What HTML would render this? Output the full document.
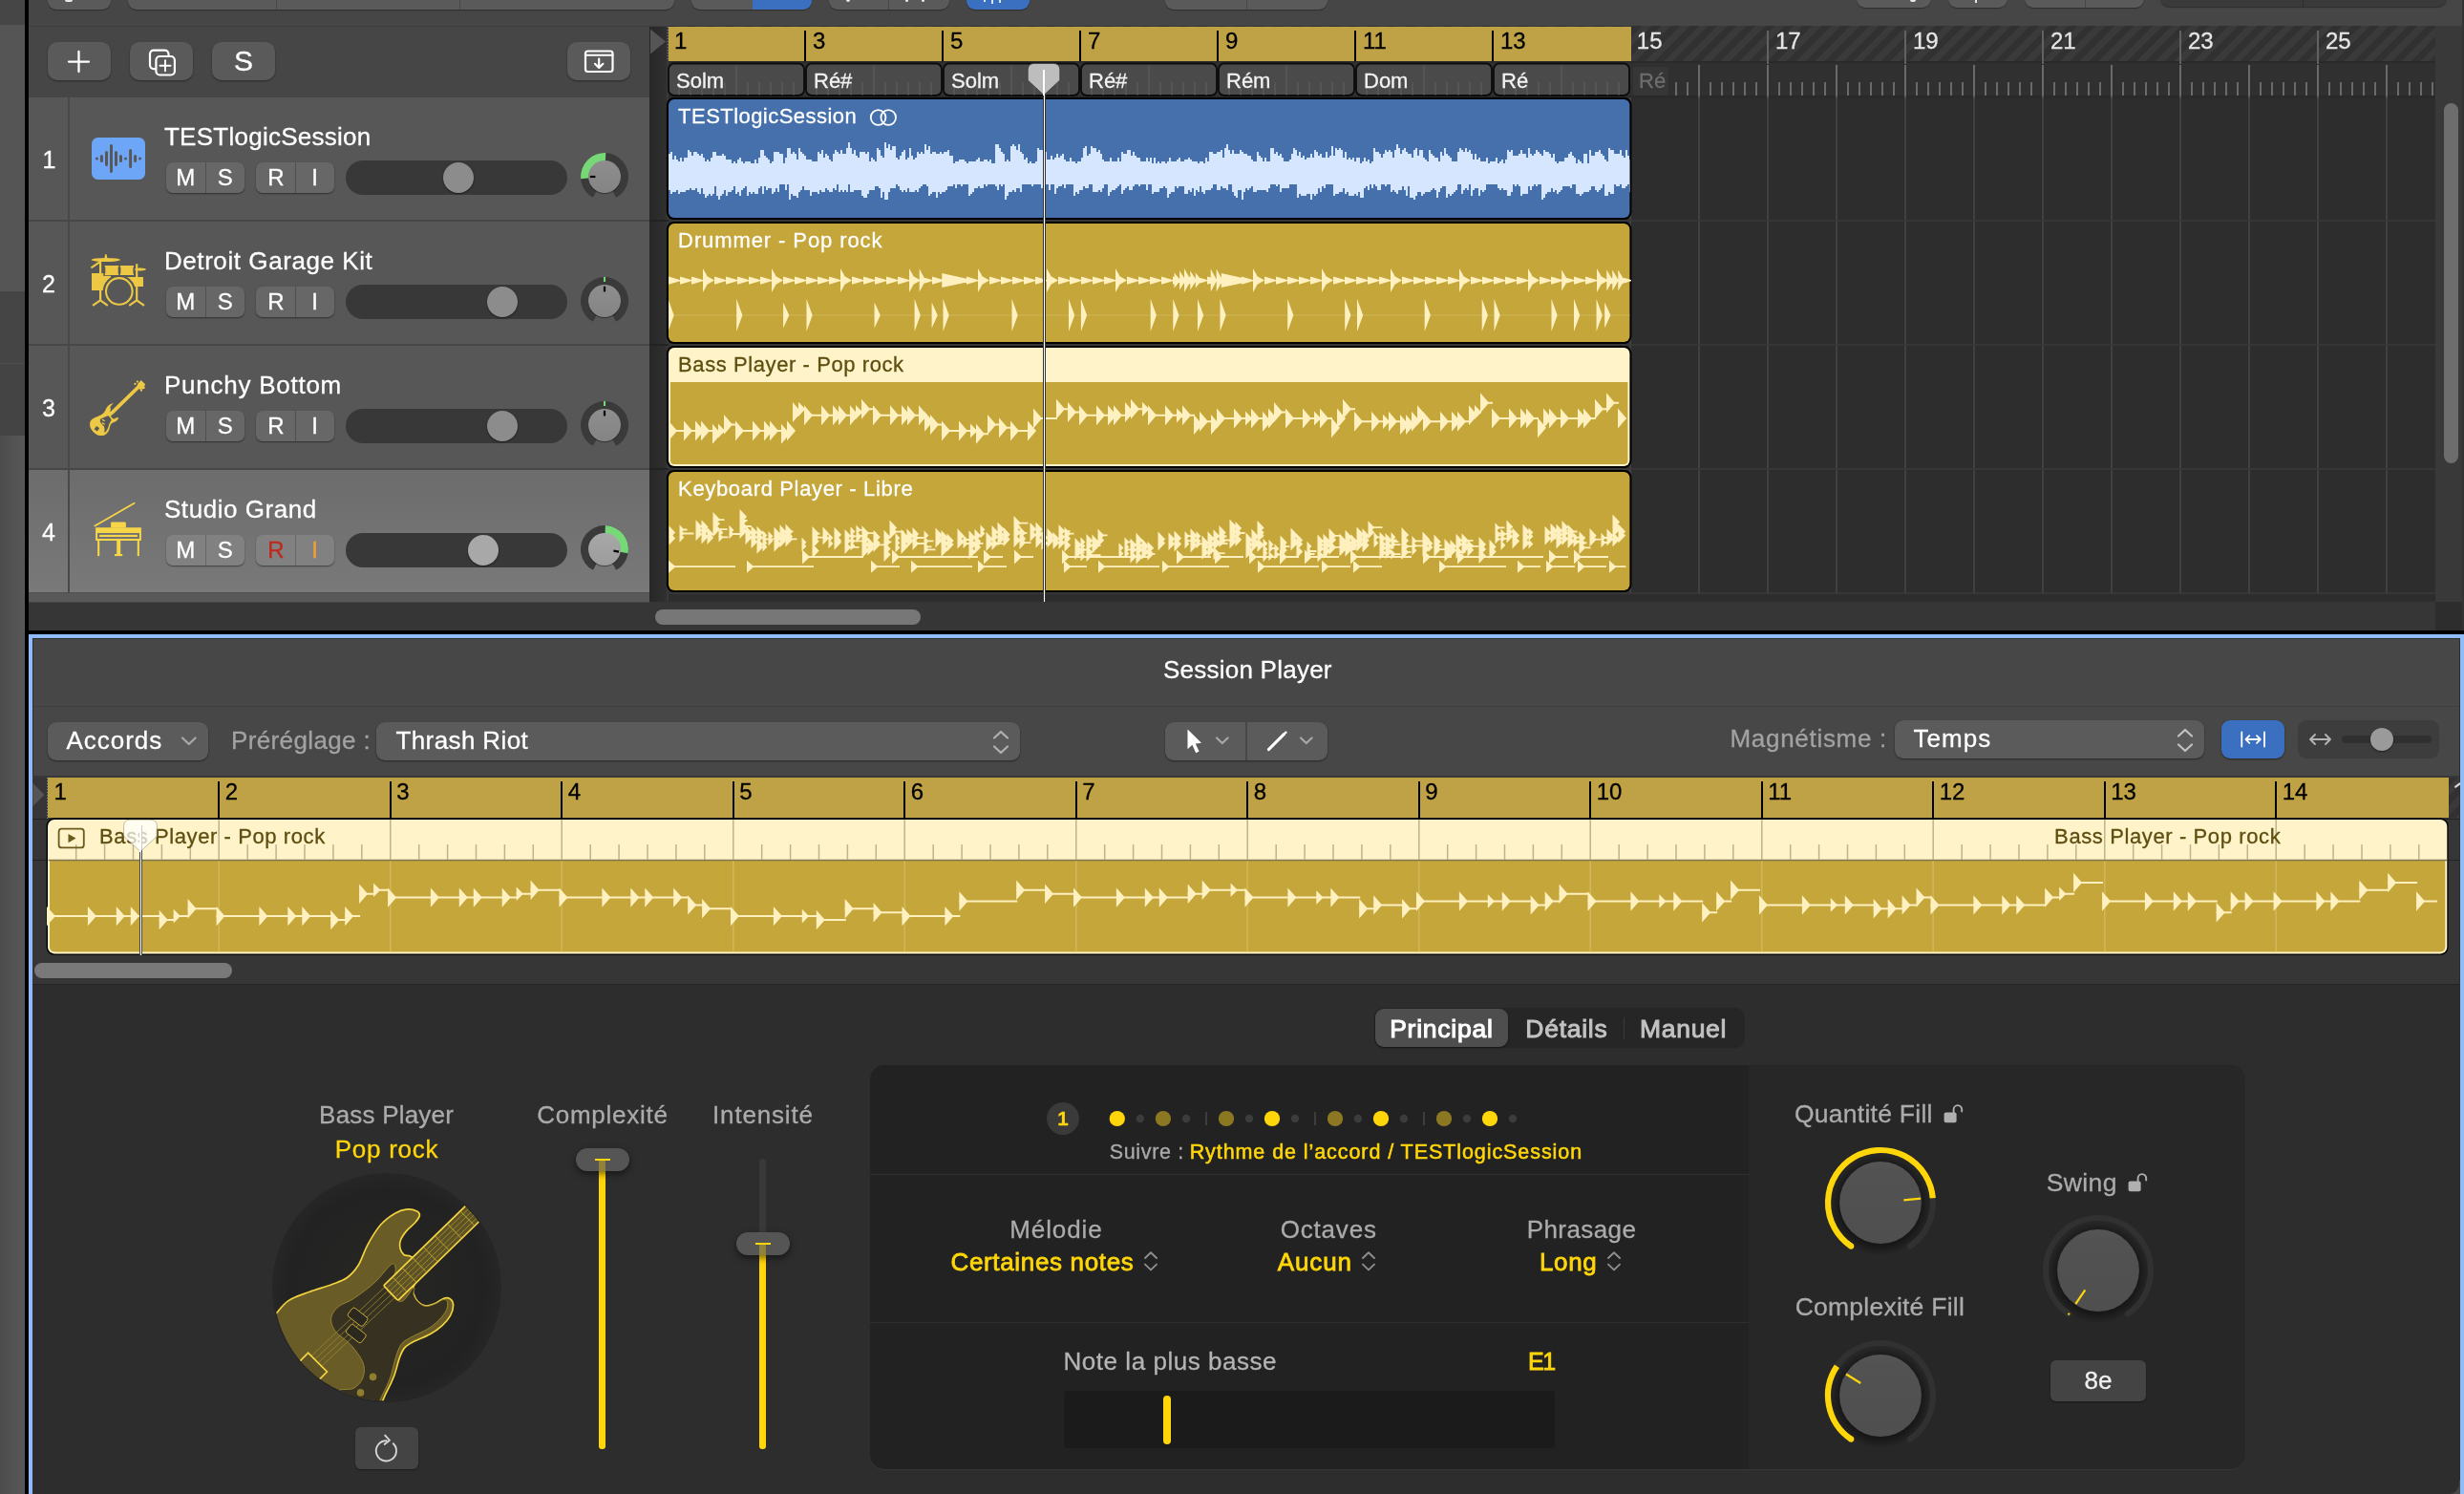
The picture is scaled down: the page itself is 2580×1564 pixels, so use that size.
<!DOCTYPE html>
<html lang="fr"><head><meta charset="utf-8"><title>Logic Pro - Session Player</title>
<style>
html,body{margin:0;padding:0}
body{width:2580px;height:1564px;overflow:hidden;position:relative;background:#464646;font-family:"Liberation Sans",sans-serif;-webkit-font-smoothing:antialiased}
div,span,svg{position:absolute;box-sizing:border-box}
span{white-space:nowrap;-webkit-text-stroke:0.3px currentColor}
#root{left:0;top:0;width:2580px;height:1564px;transform:translateZ(0);will-change:transform}
</style></head><body><div id="root">
<div style="left:0px;top:0px;width:26px;height:26px;background:#464646;"></div>
<div style="left:0px;top:26px;width:26px;height:279px;background:#555555;"></div>
<div style="left:0px;top:305px;width:26px;height:75px;background:#454545;"></div>
<div style="left:0px;top:380px;width:26px;height:76px;background:#444444;border-top:1px solid #4e4e4e;"></div>
<div style="left:0px;top:456px;width:26px;height:1108px;background:linear-gradient(90deg,#4c4c4c,#585858);"></div>
<div style="left:26px;top:0px;width:4px;height:1564px;background:#000;"></div>
<div style="left:30px;top:0px;width:2550px;height:27px;background:#464646;"></div>
<div style="left:30px;top:27px;width:2550px;height:1px;background:#3d3d3d;"></div>
<div style="left:50px;top:-12px;width:66px;height:22px;background:#5a5a5a;border-radius:9px;box-shadow:0 1px 1px rgba(0,0,0,.35);"></div>
<div style="left:134px;top:-12px;width:572px;height:22px;background:#5a5a5a;border-radius:9px;box-shadow:0 1px 1px rgba(0,0,0,.35);"></div>
<div style="left:289px;top:0px;width:1px;height:10px;background:#474747;"></div>
<div style="left:481px;top:0px;width:1px;height:10px;background:#474747;"></div>
<div style="left:724px;top:-12px;width:126px;height:22px;background:#5a5a5a;border-radius:9px;box-shadow:0 1px 1px rgba(0,0,0,.35);"></div>
<div style="left:788px;top:-12px;width:62px;height:22px;background:#3b6fc0;border-radius:0 9px 9px 0;"></div>
<div style="left:868px;top:-12px;width:126px;height:22px;background:#5a5a5a;border-radius:9px;box-shadow:0 1px 1px rgba(0,0,0,.35);"></div>
<div style="left:930px;top:0px;width:1px;height:10px;background:#474747;"></div>
<div style="left:1012px;top:-12px;width:66px;height:22px;background:#3b6fc0;border-radius:9px;box-shadow:0 1px 1px rgba(0,0,0,.35);"></div>
<div style="left:1220px;top:-12px;width:170px;height:22px;background:#5a5a5a;border-radius:9px;box-shadow:0 1px 1px rgba(0,0,0,.35);"></div>
<div style="left:1305px;top:0px;width:1px;height:10px;background:#474747;"></div>
<div style="left:1944px;top:-12px;width:78px;height:20px;background:#5a5a5a;border-radius:9px;box-shadow:0 1px 1px rgba(0,0,0,.35);"></div>
<div style="left:2040px;top:-12px;width:62px;height:20px;background:#5a5a5a;border-radius:9px;box-shadow:0 1px 1px rgba(0,0,0,.35);"></div>
<div style="left:2120px;top:-12px;width:125px;height:20px;background:#5a5a5a;border-radius:9px;box-shadow:0 1px 1px rgba(0,0,0,.35);"></div>
<div style="left:2183px;top:0px;width:1px;height:8px;background:#474747;"></div>
<div style="left:2262px;top:-12px;width:300px;height:19px;background:#3a3a3a;border-radius:9px;box-shadow:0 1px 1px rgba(0,0,0,.35);"></div>
<div style="left:2411px;top:0px;width:1px;height:7px;background:#2c2c2c;"></div>
<div style="left:68px;top:0px;width:8px;height:2px;background:#e8e8e8;border-radius:0 0 2px 2px;"></div>
<div style="left:886px;top:0px;width:4px;height:2px;background:#e8e8e8;border-radius:0 0 2px 2px;"></div>
<div style="left:948px;top:0px;width:3px;height:2px;background:#e8e8e8;border-radius:0 0 2px 2px;"></div>
<div style="left:965px;top:0px;width:3px;height:2px;background:#e8e8e8;border-radius:0 0 2px 2px;"></div>
<div style="left:2000px;top:0px;width:6px;height:2px;background:#e8e8e8;border-radius:0 0 2px 2px;"></div>
<div style="left:1038px;top:0px;width:2px;height:4px;background:#d8e4f8;"></div>
<div style="left:1046px;top:0px;width:2px;height:3px;background:#d8e4f8;"></div>
<div style="left:1030px;top:0px;width:2px;height:2px;background:#d8e4f8;"></div>
<div style="left:2068px;top:0px;width:2px;height:3px;background:#e8e8e8;"></div>
<div style="left:30px;top:28px;width:650px;height:74px;background:#464646;"></div>
<div style="left:50px;top:44px;width:66px;height:40px;background:#5a5a5a;border-radius:10px;box-shadow:0 1px 2px rgba(0,0,0,.4);"></div>
<div style="left:136px;top:44px;width:66px;height:40px;background:#5a5a5a;border-radius:10px;box-shadow:0 1px 2px rgba(0,0,0,.4);"></div>
<div style="left:222px;top:44px;width:66px;height:40px;background:#5a5a5a;border-radius:10px;box-shadow:0 1px 2px rgba(0,0,0,.4);"></div>
<div style="left:594px;top:44px;width:66px;height:40px;background:#5a5a5a;border-radius:10px;box-shadow:0 1px 2px rgba(0,0,0,.4);"></div>
<svg style="left:50px;top:44px" width="66" height="40" viewBox="0 0 66 40"><path d="M22 20.6H43M32.5 10V31" stroke="#fff" stroke-width="2.3" stroke-linecap="round" fill="none"/></svg>
<svg style="left:136px;top:44px" width="66" height="40" viewBox="0 0 66 40" fill="none" stroke="#fff" stroke-width="2.2"><rect x="21" y="8.6" width="19.5" height="19.5" rx="4"/><rect x="27.4" y="15" width="19.5" height="19.5" rx="4" fill="#5a5a5a"/><path d="M31.5 24.8H42.5M37 19.3V30.3" stroke-linecap="round" stroke-width="2"/></svg>
<span style="left:244.99px;top:49.41px;font-size:30px;line-height:30px;color:#fff;">S</span>
<svg style="left:594px;top:44px" width="66" height="40" viewBox="0 0 66 40" fill="none" stroke="#fff" stroke-width="2.2" stroke-linecap="round" stroke-linejoin="round"><rect x="19" y="9.5" width="28.5" height="21.5" rx="2.5"/><path d="M19 13.8H47.5" stroke-width="2"/><path d="M33.2 17.5V26.5M29 22.8L33.2 27L37.4 22.8"/></svg>
<div style="left:30px;top:102px;width:650px;height:528px;background:#575757;"></div>
<div style="left:30px;top:230px;width:650px;height:2px;background:#474747;"></div>
<div style="left:71px;top:102px;width:1.5px;height:129px;background:#494949;"></div>
<span style="left:44.55px;top:154.84px;font-size:25px;line-height:25px;color:#fff;">1</span>
<span style="left:171.96px;top:129.99px;font-size:26px;line-height:26px;color:#fff;letter-spacing:0.260px;">TESTlogicSession</span>
<div style="left:174px;top:170px;width:82px;height:32px;background:#676767;border-radius:7px;box-shadow:0 1px 1.5px rgba(0,0,0,.45);"></div>
<div style="left:214.5px;top:170px;width:1.5px;height:32px;background:#505050;"></div>
<div style="left:268px;top:170px;width:82px;height:32px;background:#676767;border-radius:7px;box-shadow:0 1px 1.5px rgba(0,0,0,.45);"></div>
<div style="left:308.5px;top:170px;width:1.5px;height:32px;background:#505050;"></div>
<span style="left:184.30px;top:174.48px;font-size:24px;line-height:24px;color:#fff;">M</span>
<span style="left:227.80px;top:174.48px;font-size:24px;line-height:24px;color:#fff;">S</span>
<span style="left:280.33px;top:174.48px;font-size:24px;line-height:24px;color:#fff;">R</span>
<span style="left:326.27px;top:174.48px;font-size:24px;line-height:24px;color:#fff;">I</span>
<div style="left:362px;top:168px;width:232px;height:36px;background:#383838;border-radius:18px;"></div>
<div style="left:464px;top:170px;width:32px;height:32px;background:#8c8c8c;border-radius:16px;box-shadow:0 1px 2px rgba(0,0,0,.5);"></div>
<div style="left:30px;top:360px;width:650px;height:2px;background:#474747;"></div>
<div style="left:71px;top:232px;width:1.5px;height:129px;background:#494949;"></div>
<span style="left:44.05px;top:284.84px;font-size:25px;line-height:25px;color:#fff;">2</span>
<span style="left:171.96px;top:259.99px;font-size:26px;line-height:26px;color:#fff;letter-spacing:0.572px;">Detroit Garage Kit</span>
<div style="left:174px;top:300px;width:82px;height:32px;background:#676767;border-radius:7px;box-shadow:0 1px 1.5px rgba(0,0,0,.45);"></div>
<div style="left:214.5px;top:300px;width:1.5px;height:32px;background:#505050;"></div>
<div style="left:268px;top:300px;width:82px;height:32px;background:#676767;border-radius:7px;box-shadow:0 1px 1.5px rgba(0,0,0,.45);"></div>
<div style="left:308.5px;top:300px;width:1.5px;height:32px;background:#505050;"></div>
<span style="left:184.30px;top:304.48px;font-size:24px;line-height:24px;color:#fff;">M</span>
<span style="left:227.80px;top:304.48px;font-size:24px;line-height:24px;color:#fff;">S</span>
<span style="left:280.33px;top:304.48px;font-size:24px;line-height:24px;color:#fff;">R</span>
<span style="left:326.27px;top:304.48px;font-size:24px;line-height:24px;color:#fff;">I</span>
<div style="left:362px;top:298px;width:232px;height:36px;background:#383838;border-radius:18px;"></div>
<div style="left:510px;top:300px;width:32px;height:32px;background:#8c8c8c;border-radius:16px;box-shadow:0 1px 2px rgba(0,0,0,.5);"></div>
<div style="left:30px;top:490px;width:650px;height:2px;background:#474747;"></div>
<div style="left:71px;top:362px;width:1.5px;height:129px;background:#494949;"></div>
<span style="left:44.05px;top:414.84px;font-size:25px;line-height:25px;color:#fff;">3</span>
<span style="left:171.96px;top:389.99px;font-size:26px;line-height:26px;color:#fff;letter-spacing:0.750px;">Punchy Bottom</span>
<div style="left:174px;top:430px;width:82px;height:32px;background:#676767;border-radius:7px;box-shadow:0 1px 1.5px rgba(0,0,0,.45);"></div>
<div style="left:214.5px;top:430px;width:1.5px;height:32px;background:#505050;"></div>
<div style="left:268px;top:430px;width:82px;height:32px;background:#676767;border-radius:7px;box-shadow:0 1px 1.5px rgba(0,0,0,.45);"></div>
<div style="left:308.5px;top:430px;width:1.5px;height:32px;background:#505050;"></div>
<span style="left:184.30px;top:434.48px;font-size:24px;line-height:24px;color:#fff;">M</span>
<span style="left:227.80px;top:434.48px;font-size:24px;line-height:24px;color:#fff;">S</span>
<span style="left:280.33px;top:434.48px;font-size:24px;line-height:24px;color:#fff;">R</span>
<span style="left:326.27px;top:434.48px;font-size:24px;line-height:24px;color:#fff;">I</span>
<div style="left:362px;top:428px;width:232px;height:36px;background:#383838;border-radius:18px;"></div>
<div style="left:510px;top:430px;width:32px;height:32px;background:#8c8c8c;border-radius:16px;box-shadow:0 1px 2px rgba(0,0,0,.5);"></div>
<div style="left:30px;top:492px;width:650px;height:129px;background:linear-gradient(180deg,#6c6c6c,#797979);"></div>
<div style="left:30px;top:620px;width:650px;height:2px;background:#4f4f4f;"></div>
<div style="left:71px;top:492px;width:1.5px;height:129px;background:#494949;"></div>
<span style="left:44.05px;top:544.84px;font-size:25px;line-height:25px;color:#fff;">4</span>
<span style="left:171.96px;top:519.99px;font-size:26px;line-height:26px;color:#fff;letter-spacing:0.555px;">Studio Grand</span>
<div style="left:174px;top:560px;width:82px;height:32px;background:#818181;border-radius:7px;box-shadow:0 1px 1.5px rgba(0,0,0,.45);"></div>
<div style="left:214.5px;top:560px;width:1.5px;height:32px;background:#676767;"></div>
<div style="left:268px;top:560px;width:82px;height:32px;background:#818181;border-radius:7px;box-shadow:0 1px 1.5px rgba(0,0,0,.45);"></div>
<div style="left:308.5px;top:560px;width:1.5px;height:32px;background:#676767;"></div>
<span style="left:184.30px;top:564.48px;font-size:24px;line-height:24px;color:#fff;">M</span>
<span style="left:227.80px;top:564.48px;font-size:24px;line-height:24px;color:#fff;">S</span>
<span style="left:280.33px;top:564.48px;font-size:24px;line-height:24px;color:#c0281c;">R</span>
<span style="left:326.27px;top:564.48px;font-size:24px;line-height:24px;color:#f0a030;">I</span>
<div style="left:362px;top:558px;width:232px;height:36px;background:#383838;border-radius:18px;"></div>
<div style="left:490px;top:560px;width:32px;height:32px;background:#a8a8a8;border-radius:16px;box-shadow:0 1px 2px rgba(0,0,0,.5);"></div>
<svg style="left:600.8px;top:152.8px" width="64" height="64" viewBox="0 0 64 64"><path d="M19.88 53.87A25 25 0 1 1 44.12 53.87L39.27 45.12A15 15 0 1 0 24.73 45.12Z" fill="#3a3a3a"/><path d="M7.10 34.18A25 25 0 0 1 33.31 7.03L32.79 17.02A15 15 0 0 0 17.06 33.31Z" fill="#77d877"/><defs><linearGradient id="kg0" x1="0" y1="0" x2="0" y2="1"><stop offset="0" stop-color="#8e8e8e"/><stop offset="1" stop-color="#848484"/></linearGradient></defs><circle cx="32" cy="33.2" r="17" fill="rgba(0,0,0,.35)"/><circle cx="32" cy="32" r="17" fill="url(#kg0)"/><path d="M16.80 32.00L22.40 32.00" stroke="#000" stroke-width="2.2"/></svg>
<svg style="left:600.8px;top:282.8px" width="64" height="64" viewBox="0 0 64 64"><path d="M19.88 53.87A25 25 0 1 1 44.12 53.87L39.27 45.12A15 15 0 1 0 24.73 45.12Z" fill="#3a3a3a"/><defs><linearGradient id="kg1" x1="0" y1="0" x2="0" y2="1"><stop offset="0" stop-color="#8e8e8e"/><stop offset="1" stop-color="#848484"/></linearGradient></defs><circle cx="32" cy="33.2" r="17" fill="rgba(0,0,0,.35)"/><circle cx="32" cy="32" r="17" fill="url(#kg1)"/><rect x="31" y="7" width="2" height="5" fill="#77d877"/><path d="M32.00 16.80L32.00 22.40" stroke="#000" stroke-width="2.2"/></svg>
<svg style="left:600.8px;top:412.8px" width="64" height="64" viewBox="0 0 64 64"><path d="M19.88 53.87A25 25 0 1 1 44.12 53.87L39.27 45.12A15 15 0 1 0 24.73 45.12Z" fill="#3a3a3a"/><defs><linearGradient id="kg2" x1="0" y1="0" x2="0" y2="1"><stop offset="0" stop-color="#8e8e8e"/><stop offset="1" stop-color="#848484"/></linearGradient></defs><circle cx="32" cy="33.2" r="17" fill="rgba(0,0,0,.35)"/><circle cx="32" cy="32" r="17" fill="url(#kg2)"/><rect x="31" y="7" width="2" height="5" fill="#77d877"/><path d="M32.00 16.80L32.00 22.40" stroke="#000" stroke-width="2.2"/></svg>
<svg style="left:600.8px;top:542.8px" width="64" height="64" viewBox="0 0 64 64"><path d="M19.88 53.87A25 25 0 1 1 44.12 53.87L39.27 45.12A15 15 0 1 0 24.73 45.12Z" fill="#3a3a3a"/><path d="M32.87 7.02A25 25 0 0 1 56.62 36.34L46.77 34.60A15 15 0 0 0 32.52 17.01Z" fill="#77d877"/><defs><linearGradient id="kg3" x1="0" y1="0" x2="0" y2="1"><stop offset="0" stop-color="#a8a8a8"/><stop offset="1" stop-color="#9c9c9c"/></linearGradient></defs><circle cx="32" cy="33.2" r="17" fill="rgba(0,0,0,.35)"/><circle cx="32" cy="32" r="17" fill="url(#kg3)"/><path d="M46.97 34.64L41.45 33.67" stroke="#000" stroke-width="2.2"/></svg>
<svg style="left:96px;top:144px" width="56" height="44" viewBox="0 0 56 44"><rect width="56" height="44" rx="6.5" fill="#6ea6f7"/><g stroke="#585858" stroke-width="3" stroke-linecap="round"><path d="M5.4 22v.01M10.4 19.6v4.8M15.5 15.6v12.8M20.5 8.6v26.8M25.5 15.6v12.8M30.5 19.6v4.8M35.5 22v.01M40.6 13.6v16.8M45.6 19.6v4.8M50.6 22v.01"/></g></svg>
<svg style="left:90px;top:260px" width="70" height="64" viewBox="90 260 70 64"><g fill="#ecc844" stroke="none">
<ellipse cx="110.8" cy="272" rx="15" ry="2"/><path d="M109.3 270.5L110.1 266.2H111.6L112.4 270.5Z"/>
<rect x="109.7" y="278.1" width="14.5" height="1.6"/><rect x="110.3" y="278.1" width="13.4" height="9.8"/><rect x="109.7" y="286.4" width="14.5" height="1.6"/>
<rect x="125.8" y="278.1" width="14.2" height="1.6"/><rect x="126.4" y="278.1" width="13" height="9.8"/><rect x="125.8" y="286.4" width="14.2" height="1.6"/>
<rect x="96" y="286" width="12.2" height="18"/><rect x="96" y="288.8" width="20" height="15.2"/>
<rect x="132" y="290" width="18" height="10"/>
<ellipse cx="147" cy="282" rx="6" ry="1.5"/><path d="M141 282L147 280.4V283.6Z"/>
</g><circle cx="124.8" cy="304.9" r="17" fill="#575757"/><rect x="108.2" y="304" width="8" height="2" fill="#575757"/><g stroke="#ecc844" fill="none" stroke-width="2.2">
<path d="M105.1 272V314.3M95.4 280.3L104.8 274.2M105.1 314.3L97 319.8M105.1 314.3L112.8 319.8"/>
<path d="M143.2 276.2V314.3M143.2 314.3L135.2 319.8M143.2 314.3L151 319.8"/>
<circle cx="124.8" cy="304.9" r="13.8" stroke-width="2.1"/></g></svg>
<svg style="left:80px;top:380px" width="100" height="100" viewBox="0 0 1494 1494"><g fill="#ecc844">
<path d="M545 790L1000 345" stroke="#ecc844" stroke-width="54" fill="none"/>
<path d="M952 335L1010 268L1078 332L1040 410L990 416Z"/>
<circle cx="918" cy="328" r="17"/><circle cx="955" cy="292" r="17"/><circle cx="1056" cy="388" r="17"/><circle cx="1016" cy="428" r="17"/>
<path d="M575 632C573 629 548 636 535 642C522 648 510 656 498 668C486 680 475 696 465 712C455 728 451 747 440 762C429 777 417 790 400 802C383 814 362 822 340 832C318 842 289 850 270 862C251 874 236 887 226 902C216 917 211 934 210 952C209 970 212 992 220 1012C228 1032 241 1053 256 1070C271 1087 293 1105 312 1116C331 1127 352 1134 372 1136C392 1138 414 1137 432 1130C450 1123 469 1108 482 1094C495 1080 505 1061 512 1044C519 1027 520 1006 526 990C532 974 536 961 546 950C556 939 573 933 586 926C599 919 614 915 626 906C638 897 652 881 656 872C660 863 654 854 648 852C642 850 630 856 620 860C610 864 600 873 590 873C580 873 570 868 562 862C554 856 540 844 540 834C540 824 562 812 560 800C558 788 534 773 530 760C526 747 536 733 536 722C536 711 528 702 530 692C532 682 540 672 548 662C556 652 577 635 575 632Z"/></g>
<path d="M386 872C396 864 413 860 432 852C451 844 483 824 498 824C513 824 514 841 522 852C530 863 545 880 546 892C547 904 536 910 530 922C524 934 516 947 510 962C504 977 502 996 495 1012C488 1028 479 1048 470 1060C461 1072 446 1089 441 1086C436 1083 442 1054 441 1040C440 1026 439 1012 434 1000C429 988 419 977 410 966C401 955 387 943 380 932C373 921 369 908 370 898C371 888 376 880 386 872Z" fill="#575757"/>
<path d="M320 985L362 1027L320 1069L278 1027Z" fill="#575757" transform="rotate(-8 320 1027)"/>
<g stroke="#ecc844" stroke-width="20" stroke-linecap="round"><path d="M408 888L438 904M408 940L438 956"/></g></svg>
<svg style="left:95px;top:522px" width="60" height="64" viewBox="95 522 60 64"><g fill="#f7d548">
<path d="M99.4 550.5L140.6 526.7" stroke="#f7d548" stroke-width="1.8" stroke-linecap="round"/>
<rect x="116.1" y="546.4" width="15.8" height="6.2" rx="1"/>
<path d="M100.1 552.2H147.9V566H100.1ZM102.1 558.1V564H145.9V558.1Z" fill-rule="evenodd"/>
<rect x="104.1" y="559.9" width="39.8" height="2.1"/>
<rect x="102.1" y="565.9" width="2.1" height="16.2"/><rect x="143.8" y="565.9" width="2.1" height="16.2"/>
<rect x="122.2" y="565.9" width="4" height="15"/><rect x="120" y="580" width="8.2" height="2.1"/></g></svg>
<div style="left:30px;top:621px;width:650px;height:9px;background:#595959;"></div>
<div style="left:30px;top:630px;width:2550px;height:30px;background:#363636;"></div>
<div style="left:30px;top:629.5px;width:650px;height:1px;background:#444;"></div>
<div style="left:680px;top:28px;width:18px;height:602px;background:linear-gradient(90deg,#272727,#303030);"></div>
<div style="left:698px;top:28px;width:2px;height:602px;background:#383838;"></div>
<div style="left:680px;top:230.2px;width:20px;height:1.6px;background:#232323;"></div>
<div style="left:680px;top:360.2px;width:20px;height:1.6px;background:#232323;"></div>
<div style="left:680px;top:490.2px;width:20px;height:1.6px;background:#232323;"></div>
<div style="left:700px;top:102px;width:1850px;height:528px;background:#2d2d2d;"></div>
<div style="left:2550px;top:28px;width:30px;height:602px;background:#393939;"></div>
<div style="left:2550px;top:630px;width:30px;height:30px;background:#2d2d2d;"></div>
<div style="left:2578px;top:0px;width:2px;height:660px;background:#333;"></div>
<div style="left:2558.5px;top:108px;width:15px;height:377px;background:#6d6d6d;border-radius:8px;"></div>
<div style="left:700px;top:26.5px;width:1850px;height:37.5px;background:repeating-linear-gradient(135deg,#313131 0 7px,#3a3a3a 7px 14px);"></div>
<div style="left:700px;top:64px;width:1850px;height:2px;background:#2a2a2a;"></div>
<div style="left:700px;top:28px;width:1008.0px;height:36px;background:#bfa246;"></div>
<div style="left:700px;top:66px;width:1850px;height:36px;background:#303030;"></div>
<div style="left:700px;top:100px;width:1850px;height:3px;background:#2a2a2a;"></div>
<svg style="left:680px;top:28px" width="20" height="36" viewBox="0 0 20 36"><path d="M1 2.5L17 15.5L1 28.5Z" fill="#555"/><path d="M19.2 0V36" stroke="#8a8a8a" stroke-width="1" stroke-dasharray="1.2 1.8"/></svg>
<span style="left:706.00px;top:31.28px;font-size:24px;line-height:24px;color:#000;">1</span>
<div style="left:842.0px;top:32px;width:2px;height:32px;background:#000;"></div>
<span style="left:851.00px;top:31.28px;font-size:24px;line-height:24px;color:#000;">3</span>
<div style="left:986.0px;top:32px;width:2px;height:32px;background:#000;"></div>
<span style="left:995.00px;top:31.28px;font-size:24px;line-height:24px;color:#000;">5</span>
<div style="left:1130.0px;top:32px;width:2px;height:32px;background:#000;"></div>
<span style="left:1139.00px;top:31.28px;font-size:24px;line-height:24px;color:#000;">7</span>
<div style="left:1274.0px;top:32px;width:2px;height:32px;background:#000;"></div>
<span style="left:1283.00px;top:31.28px;font-size:24px;line-height:24px;color:#000;">9</span>
<div style="left:1418.0px;top:32px;width:2px;height:32px;background:#000;"></div>
<span style="left:1427.00px;top:31.28px;font-size:24px;line-height:24px;color:#000;">11</span>
<div style="left:1562.0px;top:32px;width:2px;height:32px;background:#000;"></div>
<span style="left:1571.00px;top:31.28px;font-size:24px;line-height:24px;color:#000;">13</span>
<span style="left:1713.80px;top:31.28px;font-size:24px;line-height:24px;color:#e6e6e6;">15</span>
<div style="left:1850.0px;top:32px;width:2px;height:32px;background:#626262;"></div>
<span style="left:1859.00px;top:31.28px;font-size:24px;line-height:24px;color:#e6e6e6;">17</span>
<div style="left:1994.0px;top:32px;width:2px;height:32px;background:#626262;"></div>
<span style="left:2003.00px;top:31.28px;font-size:24px;line-height:24px;color:#e6e6e6;">19</span>
<div style="left:2138.0px;top:32px;width:2px;height:32px;background:#626262;"></div>
<span style="left:2147.00px;top:31.28px;font-size:24px;line-height:24px;color:#e6e6e6;">21</span>
<div style="left:2282.0px;top:32px;width:2px;height:32px;background:#626262;"></div>
<span style="left:2291.00px;top:31.28px;font-size:24px;line-height:24px;color:#e6e6e6;">23</span>
<div style="left:2426.0px;top:32px;width:2px;height:32px;background:#626262;"></div>
<span style="left:2435.00px;top:31.28px;font-size:24px;line-height:24px;color:#e6e6e6;">25</span>
<div style="left:1778.0px;top:99px;width:2px;height:4px;background:#585858;"></div>
<div style="left:1850.0px;top:63px;width:2px;height:4px;background:#5e5e5e;"></div>
<div style="left:1850.0px;top:99px;width:2px;height:4px;background:#585858;"></div>
<div style="left:1922.0px;top:99px;width:2px;height:4px;background:#585858;"></div>
<div style="left:1994.0px;top:63px;width:2px;height:4px;background:#5e5e5e;"></div>
<div style="left:1994.0px;top:99px;width:2px;height:4px;background:#585858;"></div>
<div style="left:2066.0px;top:99px;width:2px;height:4px;background:#585858;"></div>
<div style="left:2138.0px;top:63px;width:2px;height:4px;background:#5e5e5e;"></div>
<div style="left:2138.0px;top:99px;width:2px;height:4px;background:#585858;"></div>
<div style="left:2210.0px;top:99px;width:2px;height:4px;background:#585858;"></div>
<div style="left:2282.0px;top:63px;width:2px;height:4px;background:#5e5e5e;"></div>
<div style="left:2282.0px;top:99px;width:2px;height:4px;background:#585858;"></div>
<div style="left:2354.0px;top:99px;width:2px;height:4px;background:#585858;"></div>
<div style="left:2426.0px;top:63px;width:2px;height:4px;background:#5e5e5e;"></div>
<div style="left:2426.0px;top:99px;width:2px;height:4px;background:#585858;"></div>
<div style="left:2498.0px;top:99px;width:2px;height:4px;background:#585858;"></div>
<svg style="left:0;top:0" width="2580" height="110" viewBox="0 0 2580 110"><rect x="700.0" y="66.5" width="142.0" height="33.5" rx="6" fill="#4a4a4a" stroke="#0c0c0c" stroke-width="1.8"/><path d="M711.0 86V99.5" stroke="#5b5b5b" stroke-width="1.4"/><path d="M723.0 86V99.5" stroke="#5b5b5b" stroke-width="1.4"/><path d="M735.0 86V99.5" stroke="#5b5b5b" stroke-width="1.4"/><path d="M747.0 86V99.5" stroke="#5b5b5b" stroke-width="1.4"/><path d="M759.0 86V99.5" stroke="#5b5b5b" stroke-width="1.4"/><path d="M771.0 69V99.5" stroke="#5b5b5b" stroke-width="1.4"/><path d="M783.0 86V99.5" stroke="#5b5b5b" stroke-width="1.4"/><path d="M795.0 86V99.5" stroke="#5b5b5b" stroke-width="1.4"/><path d="M807.0 86V99.5" stroke="#5b5b5b" stroke-width="1.4"/><path d="M819.0 86V99.5" stroke="#5b5b5b" stroke-width="1.4"/><path d="M831.0 86V99.5" stroke="#5b5b5b" stroke-width="1.4"/><rect x="844.0" y="66.5" width="142.0" height="33.5" rx="6" fill="#4a4a4a" stroke="#0c0c0c" stroke-width="1.8"/><path d="M855.0 86V99.5" stroke="#5b5b5b" stroke-width="1.4"/><path d="M867.0 86V99.5" stroke="#5b5b5b" stroke-width="1.4"/><path d="M879.0 86V99.5" stroke="#5b5b5b" stroke-width="1.4"/><path d="M891.0 86V99.5" stroke="#5b5b5b" stroke-width="1.4"/><path d="M903.0 86V99.5" stroke="#5b5b5b" stroke-width="1.4"/><path d="M915.0 69V99.5" stroke="#5b5b5b" stroke-width="1.4"/><path d="M927.0 86V99.5" stroke="#5b5b5b" stroke-width="1.4"/><path d="M939.0 86V99.5" stroke="#5b5b5b" stroke-width="1.4"/><path d="M951.0 86V99.5" stroke="#5b5b5b" stroke-width="1.4"/><path d="M963.0 86V99.5" stroke="#5b5b5b" stroke-width="1.4"/><path d="M975.0 86V99.5" stroke="#5b5b5b" stroke-width="1.4"/><rect x="988.0" y="66.5" width="142.0" height="33.5" rx="6" fill="#4a4a4a" stroke="#0c0c0c" stroke-width="1.8"/><path d="M999.0 86V99.5" stroke="#5b5b5b" stroke-width="1.4"/><path d="M1011.0 86V99.5" stroke="#5b5b5b" stroke-width="1.4"/><path d="M1023.0 86V99.5" stroke="#5b5b5b" stroke-width="1.4"/><path d="M1035.0 86V99.5" stroke="#5b5b5b" stroke-width="1.4"/><path d="M1047.0 86V99.5" stroke="#5b5b5b" stroke-width="1.4"/><path d="M1059.0 69V99.5" stroke="#5b5b5b" stroke-width="1.4"/><path d="M1071.0 86V99.5" stroke="#5b5b5b" stroke-width="1.4"/><path d="M1083.0 86V99.5" stroke="#5b5b5b" stroke-width="1.4"/><path d="M1095.0 86V99.5" stroke="#5b5b5b" stroke-width="1.4"/><path d="M1107.0 86V99.5" stroke="#5b5b5b" stroke-width="1.4"/><path d="M1119.0 86V99.5" stroke="#5b5b5b" stroke-width="1.4"/><rect x="1132.0" y="66.5" width="142.0" height="33.5" rx="6" fill="#4a4a4a" stroke="#0c0c0c" stroke-width="1.8"/><path d="M1143.0 86V99.5" stroke="#5b5b5b" stroke-width="1.4"/><path d="M1155.0 86V99.5" stroke="#5b5b5b" stroke-width="1.4"/><path d="M1167.0 86V99.5" stroke="#5b5b5b" stroke-width="1.4"/><path d="M1179.0 86V99.5" stroke="#5b5b5b" stroke-width="1.4"/><path d="M1191.0 86V99.5" stroke="#5b5b5b" stroke-width="1.4"/><path d="M1203.0 69V99.5" stroke="#5b5b5b" stroke-width="1.4"/><path d="M1215.0 86V99.5" stroke="#5b5b5b" stroke-width="1.4"/><path d="M1227.0 86V99.5" stroke="#5b5b5b" stroke-width="1.4"/><path d="M1239.0 86V99.5" stroke="#5b5b5b" stroke-width="1.4"/><path d="M1251.0 86V99.5" stroke="#5b5b5b" stroke-width="1.4"/><path d="M1263.0 86V99.5" stroke="#5b5b5b" stroke-width="1.4"/><rect x="1276.0" y="66.5" width="142.0" height="33.5" rx="6" fill="#4a4a4a" stroke="#0c0c0c" stroke-width="1.8"/><path d="M1287.0 86V99.5" stroke="#5b5b5b" stroke-width="1.4"/><path d="M1299.0 86V99.5" stroke="#5b5b5b" stroke-width="1.4"/><path d="M1311.0 86V99.5" stroke="#5b5b5b" stroke-width="1.4"/><path d="M1323.0 86V99.5" stroke="#5b5b5b" stroke-width="1.4"/><path d="M1335.0 86V99.5" stroke="#5b5b5b" stroke-width="1.4"/><path d="M1347.0 69V99.5" stroke="#5b5b5b" stroke-width="1.4"/><path d="M1359.0 86V99.5" stroke="#5b5b5b" stroke-width="1.4"/><path d="M1371.0 86V99.5" stroke="#5b5b5b" stroke-width="1.4"/><path d="M1383.0 86V99.5" stroke="#5b5b5b" stroke-width="1.4"/><path d="M1395.0 86V99.5" stroke="#5b5b5b" stroke-width="1.4"/><path d="M1407.0 86V99.5" stroke="#5b5b5b" stroke-width="1.4"/><rect x="1420.0" y="66.5" width="142.0" height="33.5" rx="6" fill="#4a4a4a" stroke="#0c0c0c" stroke-width="1.8"/><path d="M1431.0 86V99.5" stroke="#5b5b5b" stroke-width="1.4"/><path d="M1443.0 86V99.5" stroke="#5b5b5b" stroke-width="1.4"/><path d="M1455.0 86V99.5" stroke="#5b5b5b" stroke-width="1.4"/><path d="M1467.0 86V99.5" stroke="#5b5b5b" stroke-width="1.4"/><path d="M1479.0 86V99.5" stroke="#5b5b5b" stroke-width="1.4"/><path d="M1491.0 69V99.5" stroke="#5b5b5b" stroke-width="1.4"/><path d="M1503.0 86V99.5" stroke="#5b5b5b" stroke-width="1.4"/><path d="M1515.0 86V99.5" stroke="#5b5b5b" stroke-width="1.4"/><path d="M1527.0 86V99.5" stroke="#5b5b5b" stroke-width="1.4"/><path d="M1539.0 86V99.5" stroke="#5b5b5b" stroke-width="1.4"/><path d="M1551.0 86V99.5" stroke="#5b5b5b" stroke-width="1.4"/><rect x="1564.0" y="66.5" width="142.0" height="33.5" rx="6" fill="#4a4a4a" stroke="#0c0c0c" stroke-width="1.8"/><path d="M1575.0 86V99.5" stroke="#5b5b5b" stroke-width="1.4"/><path d="M1587.0 86V99.5" stroke="#5b5b5b" stroke-width="1.4"/><path d="M1599.0 86V99.5" stroke="#5b5b5b" stroke-width="1.4"/><path d="M1611.0 86V99.5" stroke="#5b5b5b" stroke-width="1.4"/><path d="M1623.0 86V99.5" stroke="#5b5b5b" stroke-width="1.4"/><path d="M1635.0 69V99.5" stroke="#5b5b5b" stroke-width="1.4"/><path d="M1647.0 86V99.5" stroke="#5b5b5b" stroke-width="1.4"/><path d="M1659.0 86V99.5" stroke="#5b5b5b" stroke-width="1.4"/><path d="M1671.0 86V99.5" stroke="#5b5b5b" stroke-width="1.4"/><path d="M1683.0 86V99.5" stroke="#5b5b5b" stroke-width="1.4"/><path d="M1695.0 86V99.5" stroke="#5b5b5b" stroke-width="1.4"/><path d="M1755.0 86V100" stroke="#6a6a6a" stroke-width="2"/><path d="M1767.0 86V100" stroke="#6a6a6a" stroke-width="2"/><path d="M1779.0 68V100" stroke="#6a6a6a" stroke-width="2"/><path d="M1791.0 86V100" stroke="#6a6a6a" stroke-width="2"/><path d="M1803.0 86V100" stroke="#6a6a6a" stroke-width="2"/><path d="M1815.0 86V100" stroke="#6a6a6a" stroke-width="2"/><path d="M1827.0 86V100" stroke="#6a6a6a" stroke-width="2"/><path d="M1839.0 86V100" stroke="#6a6a6a" stroke-width="2"/><path d="M1851.0 68V100" stroke="#6a6a6a" stroke-width="2"/><path d="M1863.0 86V100" stroke="#6a6a6a" stroke-width="2"/><path d="M1875.0 86V100" stroke="#6a6a6a" stroke-width="2"/><path d="M1887.0 86V100" stroke="#6a6a6a" stroke-width="2"/><path d="M1899.0 86V100" stroke="#6a6a6a" stroke-width="2"/><path d="M1911.0 86V100" stroke="#6a6a6a" stroke-width="2"/><path d="M1923.0 68V100" stroke="#6a6a6a" stroke-width="2"/><path d="M1935.0 86V100" stroke="#6a6a6a" stroke-width="2"/><path d="M1947.0 86V100" stroke="#6a6a6a" stroke-width="2"/><path d="M1959.0 86V100" stroke="#6a6a6a" stroke-width="2"/><path d="M1971.0 86V100" stroke="#6a6a6a" stroke-width="2"/><path d="M1983.0 86V100" stroke="#6a6a6a" stroke-width="2"/><path d="M1995.0 68V100" stroke="#6a6a6a" stroke-width="2"/><path d="M2007.0 86V100" stroke="#6a6a6a" stroke-width="2"/><path d="M2019.0 86V100" stroke="#6a6a6a" stroke-width="2"/><path d="M2031.0 86V100" stroke="#6a6a6a" stroke-width="2"/><path d="M2043.0 86V100" stroke="#6a6a6a" stroke-width="2"/><path d="M2055.0 86V100" stroke="#6a6a6a" stroke-width="2"/><path d="M2067.0 68V100" stroke="#6a6a6a" stroke-width="2"/><path d="M2079.0 86V100" stroke="#6a6a6a" stroke-width="2"/><path d="M2091.0 86V100" stroke="#6a6a6a" stroke-width="2"/><path d="M2103.0 86V100" stroke="#6a6a6a" stroke-width="2"/><path d="M2115.0 86V100" stroke="#6a6a6a" stroke-width="2"/><path d="M2127.0 86V100" stroke="#6a6a6a" stroke-width="2"/><path d="M2139.0 68V100" stroke="#6a6a6a" stroke-width="2"/><path d="M2151.0 86V100" stroke="#6a6a6a" stroke-width="2"/><path d="M2163.0 86V100" stroke="#6a6a6a" stroke-width="2"/><path d="M2175.0 86V100" stroke="#6a6a6a" stroke-width="2"/><path d="M2187.0 86V100" stroke="#6a6a6a" stroke-width="2"/><path d="M2199.0 86V100" stroke="#6a6a6a" stroke-width="2"/><path d="M2211.0 68V100" stroke="#6a6a6a" stroke-width="2"/><path d="M2223.0 86V100" stroke="#6a6a6a" stroke-width="2"/><path d="M2235.0 86V100" stroke="#6a6a6a" stroke-width="2"/><path d="M2247.0 86V100" stroke="#6a6a6a" stroke-width="2"/><path d="M2259.0 86V100" stroke="#6a6a6a" stroke-width="2"/><path d="M2271.0 86V100" stroke="#6a6a6a" stroke-width="2"/><path d="M2283.0 68V100" stroke="#6a6a6a" stroke-width="2"/><path d="M2295.0 86V100" stroke="#6a6a6a" stroke-width="2"/><path d="M2307.0 86V100" stroke="#6a6a6a" stroke-width="2"/><path d="M2319.0 86V100" stroke="#6a6a6a" stroke-width="2"/><path d="M2331.0 86V100" stroke="#6a6a6a" stroke-width="2"/><path d="M2343.0 86V100" stroke="#6a6a6a" stroke-width="2"/><path d="M2355.0 68V100" stroke="#6a6a6a" stroke-width="2"/><path d="M2367.0 86V100" stroke="#6a6a6a" stroke-width="2"/><path d="M2379.0 86V100" stroke="#6a6a6a" stroke-width="2"/><path d="M2391.0 86V100" stroke="#6a6a6a" stroke-width="2"/><path d="M2403.0 86V100" stroke="#6a6a6a" stroke-width="2"/><path d="M2415.0 86V100" stroke="#6a6a6a" stroke-width="2"/><path d="M2427.0 68V100" stroke="#6a6a6a" stroke-width="2"/><path d="M2439.0 86V100" stroke="#6a6a6a" stroke-width="2"/><path d="M2451.0 86V100" stroke="#6a6a6a" stroke-width="2"/><path d="M2463.0 86V100" stroke="#6a6a6a" stroke-width="2"/><path d="M2475.0 86V100" stroke="#6a6a6a" stroke-width="2"/><path d="M2487.0 86V100" stroke="#6a6a6a" stroke-width="2"/><path d="M2499.0 68V100" stroke="#6a6a6a" stroke-width="2"/><path d="M2511.0 86V100" stroke="#6a6a6a" stroke-width="2"/><path d="M2523.0 86V100" stroke="#6a6a6a" stroke-width="2"/><path d="M2535.0 86V100" stroke="#6a6a6a" stroke-width="2"/><path d="M2547.0 86V100" stroke="#6a6a6a" stroke-width="2"/><rect x="1710.0" y="70" width="37" height="30" rx="3" fill="#363636"/></svg>
<span style="left:708.00px;top:73.58px;font-size:22px;line-height:22px;color:#f2f2f2;">Solm</span>
<span style="left:852.00px;top:73.58px;font-size:22px;line-height:22px;color:#f2f2f2;">Ré#</span>
<span style="left:996.00px;top:73.58px;font-size:22px;line-height:22px;color:#f2f2f2;">Solm</span>
<span style="left:1140.00px;top:73.58px;font-size:22px;line-height:22px;color:#f2f2f2;">Ré#</span>
<span style="left:1284.00px;top:73.58px;font-size:22px;line-height:22px;color:#f2f2f2;">Rém</span>
<span style="left:1428.00px;top:73.58px;font-size:22px;line-height:22px;color:#f2f2f2;">Dom</span>
<span style="left:1572.00px;top:73.58px;font-size:22px;line-height:22px;color:#f2f2f2;">Ré</span>
<span style="left:1716.00px;top:73.58px;font-size:22px;line-height:22px;color:#6d6d6d;">Ré</span>
<svg style="left:0;top:102px" width="2580" height="520" viewBox="0 102 2580 520"><path d="M1707.0 102V621" stroke="#474747" stroke-width="1.6"/><path d="M1779.0 102V621" stroke="#474747" stroke-width="1.6"/><path d="M1851.0 102V621" stroke="#474747" stroke-width="1.6"/><path d="M1923.0 102V621" stroke="#474747" stroke-width="1.6"/><path d="M1995.0 102V621" stroke="#474747" stroke-width="1.6"/><path d="M2067.0 102V621" stroke="#474747" stroke-width="1.6"/><path d="M2139.0 102V621" stroke="#474747" stroke-width="1.6"/><path d="M2211.0 102V621" stroke="#474747" stroke-width="1.6"/><path d="M2283.0 102V621" stroke="#474747" stroke-width="1.6"/><path d="M2355.0 102V621" stroke="#474747" stroke-width="1.6"/><path d="M2427.0 102V621" stroke="#474747" stroke-width="1.6"/><path d="M2499.0 102V621" stroke="#474747" stroke-width="1.6"/><path d="M700 231H2550" stroke="#3a3a3a" stroke-width="1.6"/><path d="M700 361H2550" stroke="#3a3a3a" stroke-width="1.6"/><path d="M700 491H2550" stroke="#3a3a3a" stroke-width="1.6"/><path d="M700 621H2550" stroke="#3a3a3a" stroke-width="1.6"/></svg>
<svg style="left:0;top:100px" width="2580" height="530" viewBox="0 100 2580 530"><defs><clipPath id="rc"><rect x="700" y="100" width="1006" height="530"/></clipPath></defs><rect x="697.9" y="101.9" width="1010.6000000000001" height="128.2" rx="8" fill="#000"/><rect x="700" y="104" width="1006.4000000000001" height="124" rx="6" fill="#4570ab"/><path d="M700.0 180.5V161.0H702.0V159.0H704.0V167.0H706.0V163.0H708.0V167.0H710.0V169.0H712.0V165.0H714.0V169.0H716.0V165.0H718.0V165.0H720.0V157.0H722.0V159.0H724.0V163.0H726.0V159.0H728.0V159.0H730.0V161.0H732.0V163.0H734.0V161.0H736.0V165.0H738.0V169.0H740.0V167.0H742.0V169.0H744.0V165.0H746.0V159.0H748.0V159.0H750.0V163.0H752.0V163.0H754.0V163.0H756.0V161.0H758.0V163.0H760.0V167.0H762.0V167.0H764.0V167.0H766.0V171.0H768.0V169.0H770.0V171.0H772.0V167.0H774.0V165.0H776.0V169.0H778.0V171.0H780.0V169.0H782.0V169.0H784.0V169.0H786.0V171.0H788.0V171.0H790.0V167.0H792.0V171.0H794.0V165.0H796.0V157.0H798.0V157.0H800.0V163.0H802.0V165.0H804.0V167.0H806.0V171.0H808.0V169.0H810.0V159.0H812.0V159.0H814.0V159.0H816.0V161.0H818.0V161.0H820.0V171.0H822.0V165.0H824.0V155.0H826.0V155.0H828.0V161.0H830.0V159.0H832.0V161.0H834.0V167.0H836.0V155.0H838.0V159.0H840.0V161.0H842.0V163.0H844.0V167.0H846.0V167.0H848.0V167.0H850.0V169.0H852.0V169.0H854.0V169.0H856.0V159.0H858.0V161.0H860.0V157.0H862.0V165.0H864.0V161.0H866.0V163.0H868.0V167.0H870.0V169.0H872.0V161.0H874.0V157.0H876.0V159.0H878.0V161.0H880.0V157.0H882.0V161.0H884.0V161.0H886.0V155.0H888.0V149.0H890.0V155.0H892.0V161.0H894.0V157.0H896.0V163.0H898.0V165.0H900.0V159.0H902.0V159.0H904.0V159.0H906.0V161.0H908.0V159.0H910.0V169.0H912.0V165.0H914.0V167.0H916.0V169.0H918.0V155.0H920.0V157.0H922.0V163.0H924.0V165.0H926.0V149.0H928.0V155.0H930.0V151.0H932.0V157.0H934.0V153.0H936.0V153.0H938.0V165.0H940.0V167.0H942.0V163.0H944.0V159.0H946.0V157.0H948.0V167.0H950.0V165.0H952.0V155.0H954.0V163.0H956.0V167.0H958.0V165.0H960.0V159.0H962.0V161.0H964.0V159.0H966.0V161.0H968.0V151.0H970.0V157.0H972.0V153.0H974.0V161.0H976.0V159.0H978.0V159.0H980.0V161.0H982.0V161.0H984.0V159.0H986.0V161.0H988.0V159.0H990.0V159.0H992.0V157.0H994.0V163.0H996.0V163.0H998.0V171.0H1000.0V169.0H1002.0V169.0H1004.0V167.0H1006.0V167.0H1008.0V167.0H1010.0V169.0H1012.0V171.0H1014.0V169.0H1016.0V169.0H1018.0V169.0H1020.0V169.0H1022.0V167.0H1024.0V165.0H1026.0V169.0H1028.0V169.0H1030.0V167.0H1032.0V167.0H1034.0V169.0H1036.0V167.0H1038.0V171.0H1040.0V171.0H1042.0V151.0H1044.0V151.0H1046.0V155.0H1048.0V159.0H1050.0V161.0H1052.0V169.0H1054.0V167.0H1056.0V169.0H1058.0V153.0H1060.0V151.0H1062.0V153.0H1064.0V157.0H1066.0V151.0H1068.0V159.0H1070.0V161.0H1072.0V167.0H1074.0V165.0H1076.0V171.0H1078.0V169.0H1080.0V171.0H1082.0V171.0H1084.0V169.0H1086.0V155.0H1088.0V157.0H1090.0V157.0H1092.0V155.0H1094.0V159.0H1096.0V167.0H1098.0V167.0H1100.0V163.0H1102.0V167.0H1104.0V165.0H1106.0V161.0H1108.0V165.0H1110.0V163.0H1112.0V161.0H1114.0V167.0H1116.0V169.0H1118.0V169.0H1120.0V165.0H1122.0V169.0H1124.0V169.0H1126.0V171.0H1128.0V169.0H1130.0V169.0H1132.0V165.0H1134.0V155.0H1136.0V153.0H1138.0V163.0H1140.0V161.0H1142.0V153.0H1144.0V155.0H1146.0V155.0H1148.0V159.0H1150.0V157.0H1152.0V161.0H1154.0V167.0H1156.0V169.0H1158.0V169.0H1160.0V169.0H1162.0V165.0H1164.0V169.0H1166.0V169.0H1168.0V169.0H1170.0V165.0H1172.0V169.0H1174.0V159.0H1176.0V161.0H1178.0V161.0H1180.0V157.0H1182.0V157.0H1184.0V163.0H1186.0V159.0H1188.0V163.0H1190.0V165.0H1192.0V165.0H1194.0V169.0H1196.0V169.0H1198.0V169.0H1200.0V165.0H1202.0V169.0H1204.0V165.0H1206.0V171.0H1208.0V165.0H1210.0V171.0H1212.0V169.0H1214.0V171.0H1216.0V169.0H1218.0V169.0H1220.0V171.0H1222.0V169.0H1224.0V165.0H1226.0V169.0H1228.0V169.0H1230.0V169.0H1232.0V167.0H1234.0V165.0H1236.0V169.0H1238.0V169.0H1240.0V167.0H1242.0V167.0H1244.0V165.0H1246.0V167.0H1248.0V169.0H1250.0V169.0H1252.0V169.0H1254.0V171.0H1256.0V169.0H1258.0V169.0H1260.0V171.0H1262.0V165.0H1264.0V169.0H1266.0V159.0H1268.0V159.0H1270.0V161.0H1272.0V161.0H1274.0V159.0H1276.0V159.0H1278.0V157.0H1280.0V165.0H1282.0V155.0H1284.0V151.0H1286.0V157.0H1288.0V161.0H1290.0V157.0H1292.0V161.0H1294.0V161.0H1296.0V161.0H1298.0V157.0H1300.0V159.0H1302.0V161.0H1304.0V161.0H1306.0V163.0H1308.0V163.0H1310.0V167.0H1312.0V169.0H1314.0V169.0H1316.0V159.0H1318.0V163.0H1320.0V165.0H1322.0V169.0H1324.0V165.0H1326.0V169.0H1328.0V169.0H1330.0V155.0H1332.0V155.0H1334.0V161.0H1336.0V159.0H1338.0V163.0H1340.0V161.0H1342.0V165.0H1344.0V169.0H1346.0V169.0H1348.0V169.0H1350.0V167.0H1352.0V161.0H1354.0V155.0H1356.0V157.0H1358.0V163.0H1360.0V159.0H1362.0V165.0H1364.0V163.0H1366.0V167.0H1368.0V165.0H1370.0V165.0H1372.0V161.0H1374.0V165.0H1376.0V157.0H1378.0V159.0H1380.0V163.0H1382.0V161.0H1384.0V165.0H1386.0V165.0H1388.0V159.0H1390.0V165.0H1392.0V163.0H1394.0V153.0H1396.0V163.0H1398.0V155.0H1400.0V157.0H1402.0V155.0H1404.0V157.0H1406.0V165.0H1408.0V159.0H1410.0V167.0H1412.0V165.0H1414.0V167.0H1416.0V165.0H1418.0V169.0H1420.0V165.0H1422.0V165.0H1424.0V171.0H1426.0V169.0H1428.0V165.0H1430.0V169.0H1432.0V167.0H1434.0V171.0H1436.0V169.0H1438.0V155.0H1440.0V159.0H1442.0V159.0H1444.0V161.0H1446.0V165.0H1448.0V161.0H1450.0V157.0H1452.0V159.0H1454.0V157.0H1456.0V159.0H1458.0V165.0H1460.0V157.0H1462.0V151.0H1464.0V155.0H1466.0V161.0H1468.0V157.0H1470.0V155.0H1472.0V159.0H1474.0V161.0H1476.0V161.0H1478.0V165.0H1480.0V157.0H1482.0V155.0H1484.0V163.0H1486.0V157.0H1488.0V157.0H1490.0V165.0H1492.0V167.0H1494.0V169.0H1496.0V157.0H1498.0V161.0H1500.0V163.0H1502.0V165.0H1504.0V165.0H1506.0V169.0H1508.0V159.0H1510.0V163.0H1512.0V155.0H1514.0V161.0H1516.0V163.0H1518.0V165.0H1520.0V169.0H1522.0V169.0H1524.0V169.0H1526.0V159.0H1528.0V155.0H1530.0V157.0H1532.0V159.0H1534.0V155.0H1536.0V159.0H1538.0V157.0H1540.0V161.0H1542.0V167.0H1544.0V161.0H1546.0V167.0H1548.0V165.0H1550.0V169.0H1552.0V169.0H1554.0V169.0H1556.0V165.0H1558.0V171.0H1560.0V169.0H1562.0V169.0H1564.0V169.0H1566.0V165.0H1568.0V171.0H1570.0V169.0H1572.0V167.0H1574.0V171.0H1576.0V167.0H1578.0V157.0H1580.0V159.0H1582.0V157.0H1584.0V163.0H1586.0V163.0H1588.0V163.0H1590.0V161.0H1592.0V157.0H1594.0V161.0H1596.0V161.0H1598.0V165.0H1600.0V155.0H1602.0V161.0H1604.0V163.0H1606.0V161.0H1608.0V157.0H1610.0V159.0H1612.0V161.0H1614.0V163.0H1616.0V157.0H1618.0V159.0H1620.0V159.0H1622.0V161.0H1624.0V165.0H1626.0V161.0H1628.0V169.0H1630.0V171.0H1632.0V169.0H1634.0V169.0H1636.0V169.0H1638.0V165.0H1640.0V165.0H1642.0V161.0H1644.0V159.0H1646.0V163.0H1648.0V165.0H1650.0V171.0H1652.0V167.0H1654.0V169.0H1656.0V171.0H1658.0V161.0H1660.0V161.0H1662.0V171.0H1664.0V157.0H1666.0V163.0H1668.0V163.0H1670.0V159.0H1672.0V159.0H1674.0V157.0H1676.0V161.0H1678.0V163.0H1680.0V167.0H1682.0V169.0H1684.0V155.0H1686.0V157.0H1688.0V157.0H1690.0V161.0H1692.0V161.0H1694.0V161.0H1696.0V157.0H1698.0V163.0H1700.0V165.0H1702.0V157.0H1704.0V163.0H1706.0V167.0H1706.4V180.5V201.0H1706.0V193.0H1704.0V195.0H1702.0V197.0H1700.0V197.0H1698.0V193.0H1696.0V195.0H1694.0V195.0H1692.0V193.0H1690.0V203.0H1688.0V203.0H1686.0V201.0H1684.0V205.0H1682.0V205.0H1680.0V193.0H1678.0V197.0H1676.0V199.0H1674.0V201.0H1672.0V199.0H1670.0V195.0H1668.0V195.0H1666.0V199.0H1664.0V201.0H1662.0V201.0H1660.0V201.0H1658.0V203.0H1656.0V205.0H1654.0V203.0H1652.0V203.0H1650.0V193.0H1648.0V193.0H1646.0V197.0H1644.0V195.0H1642.0V195.0H1640.0V195.0H1638.0V195.0H1636.0V199.0H1634.0V201.0H1632.0V203.0H1630.0V199.0H1628.0V201.0H1626.0V197.0H1624.0V201.0H1622.0V201.0H1620.0V203.0H1618.0V207.0H1616.0V209.0H1614.0V193.0H1612.0V193.0H1610.0V195.0H1608.0V193.0H1606.0V195.0H1604.0V199.0H1602.0V195.0H1600.0V203.0H1598.0V203.0H1596.0V203.0H1594.0V205.0H1592.0V195.0H1590.0V193.0H1588.0V195.0H1586.0V193.0H1584.0V201.0H1582.0V205.0H1580.0V205.0H1578.0V199.0H1576.0V199.0H1574.0V197.0H1572.0V199.0H1570.0V197.0H1568.0V193.0H1566.0V193.0H1564.0V193.0H1562.0V193.0H1560.0V193.0H1558.0V193.0H1556.0V199.0H1554.0V201.0H1552.0V199.0H1550.0V205.0H1548.0V197.0H1546.0V197.0H1544.0V199.0H1542.0V205.0H1540.0V193.0H1538.0V199.0H1536.0V197.0H1534.0V199.0H1532.0V203.0H1530.0V193.0H1528.0V193.0H1526.0V199.0H1524.0V201.0H1522.0V203.0H1520.0V205.0H1518.0V203.0H1516.0V207.0H1514.0V195.0H1512.0V195.0H1510.0V197.0H1508.0V201.0H1506.0V207.0H1504.0V199.0H1502.0V197.0H1500.0V199.0H1498.0V201.0H1496.0V201.0H1494.0V201.0H1492.0V203.0H1490.0V205.0H1488.0V201.0H1486.0V201.0H1484.0V205.0H1482.0V209.0H1480.0V207.0H1478.0V207.0H1476.0V195.0H1474.0V205.0H1472.0V199.0H1470.0V195.0H1468.0V199.0H1466.0V199.0H1464.0V203.0H1462.0V201.0H1460.0V199.0H1458.0V201.0H1456.0V193.0H1454.0V193.0H1452.0V195.0H1450.0V193.0H1448.0V193.0H1446.0V199.0H1444.0V199.0H1442.0V195.0H1440.0V193.0H1438.0V197.0H1436.0V193.0H1434.0V199.0H1432.0V195.0H1430.0V197.0H1428.0V207.0H1426.0V207.0H1424.0V201.0H1422.0V205.0H1420.0V203.0H1418.0V205.0H1416.0V205.0H1414.0V205.0H1412.0V201.0H1410.0V203.0H1408.0V197.0H1406.0V201.0H1404.0V201.0H1402.0V203.0H1400.0V203.0H1398.0V205.0H1396.0V193.0H1394.0V193.0H1392.0V193.0H1390.0V193.0H1388.0V197.0H1386.0V195.0H1384.0V201.0H1382.0V197.0H1380.0V203.0H1378.0V205.0H1376.0V203.0H1374.0V209.0H1372.0V203.0H1370.0V203.0H1368.0V205.0H1366.0V205.0H1364.0V205.0H1362.0V203.0H1360.0V207.0H1358.0V193.0H1356.0V193.0H1354.0V193.0H1352.0V193.0H1350.0V197.0H1348.0V197.0H1346.0V197.0H1344.0V197.0H1342.0V201.0H1340.0V193.0H1338.0V195.0H1336.0V193.0H1334.0V193.0H1332.0V193.0H1330.0V197.0H1328.0V201.0H1326.0V199.0H1324.0V199.0H1322.0V199.0H1320.0V199.0H1318.0V199.0H1316.0V201.0H1314.0V201.0H1312.0V195.0H1310.0V197.0H1308.0V199.0H1306.0V197.0H1304.0V201.0H1302.0V209.0H1300.0V199.0H1298.0V199.0H1296.0V207.0H1294.0V205.0H1292.0V201.0H1290.0V193.0H1288.0V193.0H1286.0V199.0H1284.0V197.0H1282.0V197.0H1280.0V195.0H1278.0V199.0H1276.0V199.0H1274.0V193.0H1272.0V193.0H1270.0V197.0H1268.0V199.0H1266.0V199.0H1264.0V199.0H1262.0V203.0H1260.0V201.0H1258.0V195.0H1256.0V201.0H1254.0V199.0H1252.0V205.0H1250.0V197.0H1248.0V201.0H1246.0V199.0H1244.0V203.0H1242.0V203.0H1240.0V195.0H1238.0V195.0H1236.0V195.0H1234.0V197.0H1232.0V195.0H1230.0V201.0H1228.0V201.0H1226.0V203.0H1224.0V207.0H1222.0V197.0H1220.0V195.0H1218.0V197.0H1216.0V197.0H1214.0V201.0H1212.0V201.0H1210.0V201.0H1208.0V203.0H1206.0V193.0H1204.0V193.0H1202.0V199.0H1200.0V193.0H1198.0V193.0H1196.0V193.0H1194.0V195.0H1192.0V193.0H1190.0V193.0H1188.0V195.0H1186.0V199.0H1184.0V199.0H1182.0V195.0H1180.0V197.0H1178.0V199.0H1176.0V203.0H1174.0V193.0H1172.0V195.0H1170.0V197.0H1168.0V199.0H1166.0V199.0H1164.0V201.0H1162.0V205.0H1160.0V193.0H1158.0V193.0H1156.0V197.0H1154.0V201.0H1152.0V199.0H1150.0V201.0H1148.0V201.0H1146.0V201.0H1144.0V193.0H1142.0V193.0H1140.0V197.0H1138.0V197.0H1136.0V195.0H1134.0V199.0H1132.0V199.0H1130.0V203.0H1128.0V201.0H1126.0V205.0H1124.0V193.0H1122.0V193.0H1120.0V193.0H1118.0V193.0H1116.0V197.0H1114.0V193.0H1112.0V195.0H1110.0V195.0H1108.0V197.0H1106.0V203.0H1104.0V193.0H1102.0V193.0H1100.0V199.0H1098.0V193.0H1096.0V193.0H1094.0V193.0H1092.0V197.0H1090.0V193.0H1088.0V193.0H1086.0V193.0H1084.0V193.0H1082.0V195.0H1080.0V193.0H1078.0V193.0H1076.0V193.0H1074.0V193.0H1072.0V193.0H1070.0V201.0H1068.0V197.0H1066.0V197.0H1064.0V201.0H1062.0V199.0H1060.0V201.0H1058.0V201.0H1056.0V205.0H1054.0V209.0H1052.0V193.0H1050.0V195.0H1048.0V193.0H1046.0V199.0H1044.0V195.0H1042.0V193.0H1040.0V193.0H1038.0V193.0H1036.0V193.0H1034.0V195.0H1032.0V193.0H1030.0V197.0H1028.0V197.0H1026.0V195.0H1024.0V197.0H1022.0V197.0H1020.0V201.0H1018.0V203.0H1016.0V205.0H1014.0V193.0H1012.0V193.0H1010.0V193.0H1008.0V195.0H1006.0V193.0H1004.0V193.0H1002.0V197.0H1000.0V193.0H998.0V195.0H996.0V195.0H994.0V195.0H992.0V199.0H990.0V201.0H988.0V201.0H986.0V203.0H984.0V201.0H982.0V207.0H980.0V201.0H978.0V201.0H976.0V203.0H974.0V205.0H972.0V195.0H970.0V193.0H968.0V193.0H966.0V195.0H964.0V197.0H962.0V201.0H960.0V199.0H958.0V201.0H956.0V201.0H954.0V201.0H952.0V197.0H950.0V201.0H948.0V199.0H946.0V201.0H944.0V199.0H942.0V195.0H940.0V193.0H938.0V197.0H936.0V197.0H934.0V197.0H932.0V201.0H930.0V209.0H928.0V209.0H926.0V201.0H924.0V207.0H922.0V197.0H920.0V195.0H918.0V195.0H916.0V199.0H914.0V199.0H912.0V199.0H910.0V203.0H908.0V207.0H906.0V207.0H904.0V205.0H902.0V199.0H900.0V199.0H898.0V199.0H896.0V199.0H894.0V201.0H892.0V201.0H890.0V193.0H888.0V201.0H886.0V199.0H884.0V201.0H882.0V199.0H880.0V201.0H878.0V193.0H876.0V199.0H874.0V197.0H872.0V201.0H870.0V201.0H868.0V199.0H866.0V197.0H864.0V201.0H862.0V201.0H860.0V199.0H858.0V203.0H856.0V201.0H854.0V201.0H852.0V201.0H850.0V205.0H848.0V199.0H846.0V199.0H844.0V199.0H842.0V195.0H840.0V199.0H838.0V201.0H836.0V207.0H834.0V205.0H832.0V205.0H830.0V203.0H828.0V209.0H826.0V193.0H824.0V199.0H822.0V193.0H820.0V193.0H818.0V193.0H816.0V201.0H814.0V197.0H812.0V201.0H810.0V203.0H808.0V197.0H806.0V197.0H804.0V199.0H802.0V195.0H800.0V203.0H798.0V195.0H796.0V197.0H794.0V203.0H792.0V203.0H790.0V201.0H788.0V203.0H786.0V201.0H784.0V205.0H782.0V195.0H780.0V197.0H778.0V199.0H776.0V205.0H774.0V201.0H772.0V203.0H770.0V195.0H768.0V199.0H766.0V201.0H764.0V201.0H762.0V205.0H760.0V199.0H758.0V203.0H756.0V205.0H754.0V209.0H752.0V205.0H750.0V195.0H748.0V203.0H746.0V205.0H744.0V203.0H742.0V205.0H740.0V207.0H738.0V203.0H736.0V197.0H734.0V203.0H732.0V201.0H730.0V197.0H728.0V199.0H726.0V199.0H724.0V197.0H722.0V199.0H720.0V199.0H718.0V201.0H716.0V201.0H714.0V201.0H712.0V203.0H710.0V199.0H708.0V201.0H706.0V201.0H704.0V203.0H702.0V199.0H700.0Z" fill="#d6e6ff"/><g fill="none" stroke="#fff" stroke-width="1.8"><circle cx="919.6" cy="123" r="7.8"/><circle cx="930.2" cy="123" r="7.8"/></g><rect x="697.9" y="231.9" width="1010.6000000000001" height="128.2" rx="8" fill="#000"/><rect x="700" y="234" width="1006.4000000000001" height="124" rx="6" fill="#c4a63a"/><path d="M700.0 289.40000000000003L712.0 293.0V294.20000000000005L700.0 297.8ZM712.0 289.40000000000003L724.0 293.0V294.20000000000005L712.0 297.8ZM724.0 289.40000000000003L736.0 293.0V294.20000000000005L724.0 297.8ZM736.0 281.1L743.0 293.6L736.0 306.1ZM741.0 289.6L748.0 293.6L741.0 297.6ZM748.0 289.40000000000003L760.0 293.0V294.20000000000005L748.0 297.8ZM760.0 289.40000000000003L772.0 293.0V294.20000000000005L760.0 297.8ZM772.0 289.40000000000003L784.0 293.0V294.20000000000005L772.0 297.8ZM784.0 289.40000000000003L796.0 293.0V294.20000000000005L784.0 297.8ZM796.0 289.40000000000003L808.0 293.0V294.20000000000005L796.0 297.8ZM808.0 281.1L815.0 293.6L808.0 306.1ZM813.0 289.6L820.0 293.6L813.0 297.6ZM820.0 289.40000000000003L832.0 293.0V294.20000000000005L820.0 297.8ZM832.0 289.40000000000003L844.0 293.0V294.20000000000005L832.0 297.8ZM844.0 289.40000000000003L856.0 293.0V294.20000000000005L844.0 297.8ZM856.0 289.40000000000003L868.0 293.0V294.20000000000005L856.0 297.8ZM868.0 289.40000000000003L880.0 293.0V294.20000000000005L868.0 297.8ZM880.0 281.1L887.0 293.6L880.0 306.1ZM885.0 289.6L892.0 293.6L885.0 297.6ZM892.0 289.40000000000003L904.0 293.0V294.20000000000005L892.0 297.8ZM904.0 289.40000000000003L916.0 293.0V294.20000000000005L904.0 297.8ZM916.0 289.40000000000003L928.0 293.0V294.20000000000005L916.0 297.8ZM928.0 289.40000000000003L940.0 293.0V294.20000000000005L928.0 297.8ZM940.0 289.40000000000003L952.0 293.0V294.20000000000005L940.0 297.8ZM952.0 281.1L959.0 293.6L952.0 306.1ZM957.0 289.6L964.0 293.6L957.0 297.6ZM964.0 289.40000000000003L976.0 293.0V294.20000000000005L964.0 297.8ZM976.0 289.40000000000003L988.0 293.0V294.20000000000005L976.0 297.8ZM988.0 289.40000000000003L1000.0 293.0V294.20000000000005L988.0 297.8ZM1000.0 289.40000000000003L1012.0 293.0V294.20000000000005L1000.0 297.8ZM1012.0 289.40000000000003L1024.0 293.0V294.20000000000005L1012.0 297.8ZM1024.0 281.1L1031.0 293.6L1024.0 306.1ZM1029.0 289.6L1036.0 293.6L1029.0 297.6ZM1036.0 289.40000000000003L1048.0 293.0V294.20000000000005L1036.0 297.8ZM1048.0 289.40000000000003L1060.0 293.0V294.20000000000005L1048.0 297.8ZM1060.0 289.40000000000003L1072.0 293.0V294.20000000000005L1060.0 297.8ZM1072.0 289.40000000000003L1084.0 293.0V294.20000000000005L1072.0 297.8ZM1084.0 289.40000000000003L1096.0 293.0V294.20000000000005L1084.0 297.8ZM1096.0 281.1L1103.0 293.6L1096.0 306.1ZM1101.0 289.6L1108.0 293.6L1101.0 297.6ZM1108.0 289.40000000000003L1120.0 293.0V294.20000000000005L1108.0 297.8ZM1120.0 289.40000000000003L1132.0 293.0V294.20000000000005L1120.0 297.8ZM1132.0 289.40000000000003L1144.0 293.0V294.20000000000005L1132.0 297.8ZM1144.0 289.40000000000003L1156.0 293.0V294.20000000000005L1144.0 297.8ZM1156.0 289.40000000000003L1168.0 293.0V294.20000000000005L1156.0 297.8ZM1168.0 281.1L1175.0 293.6L1168.0 306.1ZM1173.0 289.6L1180.0 293.6L1173.0 297.6ZM1180.0 289.40000000000003L1192.0 293.0V294.20000000000005L1180.0 297.8ZM1192.0 289.40000000000003L1204.0 293.0V294.20000000000005L1192.0 297.8ZM1204.0 289.40000000000003L1216.0 293.0V294.20000000000005L1204.0 297.8ZM1216.0 289.40000000000003L1228.0 293.0V294.20000000000005L1216.0 297.8ZM1228.0 289.40000000000003L1240.0 293.0V294.20000000000005L1228.0 297.8ZM1240.0 281.1L1247.0 293.6L1240.0 306.1ZM1245.0 289.6L1252.0 293.6L1245.0 297.6ZM1252.0 289.40000000000003L1264.0 293.0V294.20000000000005L1252.0 297.8ZM1264.0 289.40000000000003L1276.0 293.0V294.20000000000005L1264.0 297.8ZM1276.0 289.40000000000003L1288.0 293.0V294.20000000000005L1276.0 297.8ZM1288.0 289.40000000000003L1300.0 293.0V294.20000000000005L1288.0 297.8ZM1300.0 289.40000000000003L1312.0 293.0V294.20000000000005L1300.0 297.8ZM1312.0 281.1L1319.0 293.6L1312.0 306.1ZM1317.0 289.6L1324.0 293.6L1317.0 297.6ZM1324.0 289.40000000000003L1336.0 293.0V294.20000000000005L1324.0 297.8ZM1336.0 289.40000000000003L1348.0 293.0V294.20000000000005L1336.0 297.8ZM1348.0 289.40000000000003L1360.0 293.0V294.20000000000005L1348.0 297.8ZM1360.0 289.40000000000003L1372.0 293.0V294.20000000000005L1360.0 297.8ZM1372.0 289.40000000000003L1384.0 293.0V294.20000000000005L1372.0 297.8ZM1384.0 281.1L1391.0 293.6L1384.0 306.1ZM1389.0 289.6L1396.0 293.6L1389.0 297.6ZM1396.0 289.40000000000003L1408.0 293.0V294.20000000000005L1396.0 297.8ZM1408.0 289.40000000000003L1420.0 293.0V294.20000000000005L1408.0 297.8ZM1420.0 289.40000000000003L1432.0 293.0V294.20000000000005L1420.0 297.8ZM1432.0 289.40000000000003L1444.0 293.0V294.20000000000005L1432.0 297.8ZM1444.0 289.40000000000003L1456.0 293.0V294.20000000000005L1444.0 297.8ZM1456.0 281.1L1463.0 293.6L1456.0 306.1ZM1461.0 289.6L1468.0 293.6L1461.0 297.6ZM1468.0 289.40000000000003L1480.0 293.0V294.20000000000005L1468.0 297.8ZM1480.0 289.40000000000003L1492.0 293.0V294.20000000000005L1480.0 297.8ZM1492.0 289.40000000000003L1504.0 293.0V294.20000000000005L1492.0 297.8ZM1504.0 289.40000000000003L1516.0 293.0V294.20000000000005L1504.0 297.8ZM1516.0 289.40000000000003L1528.0 293.0V294.20000000000005L1516.0 297.8ZM1528.0 281.1L1535.0 293.6L1528.0 306.1ZM1533.0 289.6L1540.0 293.6L1533.0 297.6ZM1540.0 289.40000000000003L1552.0 293.0V294.20000000000005L1540.0 297.8ZM1552.0 289.40000000000003L1564.0 293.0V294.20000000000005L1552.0 297.8ZM1564.0 289.40000000000003L1576.0 293.0V294.20000000000005L1564.0 297.8ZM1576.0 289.40000000000003L1588.0 293.0V294.20000000000005L1576.0 297.8ZM1588.0 289.40000000000003L1600.0 293.0V294.20000000000005L1588.0 297.8ZM1600.0 281.1L1607.0 293.6L1600.0 306.1ZM1605.0 289.6L1612.0 293.6L1605.0 297.6ZM1612.0 289.40000000000003L1624.0 293.0V294.20000000000005L1612.0 297.8ZM1624.0 289.40000000000003L1636.0 293.0V294.20000000000005L1624.0 297.8ZM1636.0 289.40000000000003L1648.0 293.0V294.20000000000005L1636.0 297.8ZM1648.0 289.40000000000003L1660.0 293.0V294.20000000000005L1648.0 297.8ZM1660.0 289.40000000000003L1672.0 293.0V294.20000000000005L1660.0 297.8ZM1672.0 281.1L1679.0 293.6L1672.0 306.1ZM1677.0 289.6L1684.0 293.6L1677.0 297.6ZM1684.0 289.40000000000003L1696.0 293.0V294.20000000000005L1684.0 297.8ZM1696.0 289.40000000000003L1708.0 293.0V294.20000000000005L1696.0 297.8ZM962.7 281.6L969.2 293.6L962.7 305.6ZM1229.6 285.6L1236.1 293.6L1229.6 301.6ZM1235.1 283.6L1241.6 293.6L1235.1 303.6ZM1240.7 282.6L1247.2 293.6L1240.7 304.6ZM1246.3 283.6L1252.8 293.6L1246.3 303.6ZM1251.8 285.6L1258.3 293.6L1251.8 301.6ZM1267.7 281.6L1274.2 293.6L1267.7 305.6ZM1273.7 281.6L1280.2 293.6L1273.7 305.6ZM1635.2 282.6L1641.7 293.6L1635.2 304.6ZM1682.3 282.6L1688.8 293.6L1682.3 304.6ZM1688.3 282.6L1694.8 293.6L1688.3 304.6ZM1694.3 282.6L1700.8 293.6L1694.3 304.6ZM986.3 286.1L1013.3 292.0V295.20000000000005L986.3 301.1ZM1278.8 286.1L1305.8 292.0V295.20000000000005L1278.8 301.1Z" fill="#fff0c0"/><path d="M700 330H1706.4" stroke="#d0b558" stroke-width="1"/><path d="M699.5 313L705.7 330L699.5 347ZM771.2 313L777.4 330L771.2 347ZM820.1 316.5L826.3 330L820.1 343.5ZM844.5 313L850.7 330L844.5 347ZM915.6 316.5L921.8 330L915.6 343.5ZM957.6 313L963.8 330L957.6 347ZM975.6 316.5L981.8 330L975.6 343.5ZM987.5 313L993.7 330L987.5 347ZM1059.5 313L1065.7 330L1059.5 347ZM1119.0 313L1125.2 330L1119.0 347ZM1131.9 313L1138.1 330L1131.9 347ZM1204.7 313L1210.9 330L1204.7 347ZM1228.3 313L1234.5 330L1228.3 347ZM1254.0 313L1260.2 330L1254.0 347ZM1277.5 313L1283.7 330L1277.5 347ZM1348.2 313L1354.4 330L1348.2 347ZM1408.2 313L1414.4 330L1408.2 347ZM1421.0 313L1427.2 330L1421.0 347ZM1491.7 313L1497.9 330L1491.7 347ZM1551.7 313L1557.9 330L1551.7 347ZM1564.5 313L1570.7 330L1564.5 347ZM1624.5 313L1630.7 330L1624.5 347ZM1648.0 313L1654.2 330L1648.0 347ZM1671.6 313L1677.8 330L1671.6 347ZM1680.2 316.5L1686.4 330L1680.2 343.5Z" fill="#fff0c0" clip-path="url(#rc)"/><rect x="697.9" y="361.9" width="1010.6000000000001" height="128.2" rx="8" fill="#000"/><rect x="700" y="364" width="1006.4000000000001" height="124" rx="6" fill="#fff3c9"/><path d="M702 400H1704.4V482Q1704.4 486 1700.4 486H706Q702 486 702 482Z" fill="#c4a63a"/><path d="M700.0 451.1H716.0M716.0 451.1H728.0M728.0 451.1H734.0M734.0 451.1H747.0M746.0 454.3H753.0M752.0 451.1H759.0M758.0 444.6H771.0M770.0 451.1H788.0M788.0 451.1H800.0M800.0 451.1H806.0M806.0 451.1H819.0M818.0 454.3H825.0M824.0 451.1H831.0M830.0 431.6H837.0M836.0 428.3H843.0M842.0 434.8H860.0M860.0 434.8H872.0M872.0 434.8H878.0M878.0 434.8H890.0M890.0 434.8H897.0M896.0 431.6H903.0M902.0 428.3H915.0M914.0 434.8H932.0M932.0 434.8H944.0M944.0 434.8H950.0M950.0 434.8H962.0M962.0 434.8H969.0M968.0 441.3H975.0M974.0 444.6H987.0M986.0 451.1H1004.0M1004.0 451.1H1016.0M1016.0 451.1H1023.0M1022.0 454.3H1035.0M1034.0 444.6H1047.0M1046.0 447.8H1059.0M1058.0 451.1H1076.0M1076.0 451.1H1083.0M1082.0 438.1H1107.0M1106.0 428.3H1119.0M1118.0 431.6H1131.0M1130.0 434.8H1148.0M1148.0 434.8H1160.0M1160.0 434.8H1166.0M1166.0 434.8H1179.0M1178.0 431.6H1185.0M1184.0 428.3H1196.0M1196.0 428.3H1203.0M1202.0 434.8H1220.0M1220.0 434.8H1232.0M1232.0 434.8H1238.0M1238.0 434.8H1251.0M1250.0 444.6H1257.0M1256.0 441.3H1269.0M1268.0 444.6H1275.0M1274.0 438.1H1292.0M1292.0 438.1H1304.0M1304.0 438.1H1310.0M1310.0 438.1H1323.0M1322.0 441.3H1329.0M1328.0 438.1H1335.0M1334.0 431.6H1347.0M1346.0 438.1H1364.0M1364.0 438.1H1376.0M1376.0 438.1H1382.0M1382.0 438.1H1395.0M1394.0 447.8H1401.0M1400.0 438.1H1407.0M1406.0 428.3H1419.0M1418.0 441.3H1436.0M1436.0 441.3H1448.0M1448.0 441.3H1454.0M1454.0 441.3H1467.0M1466.0 444.6H1472.0M1472.0 444.6H1479.0M1478.0 441.3H1485.0M1484.0 434.8H1491.0M1490.0 441.3H1508.0M1508.0 441.3H1520.0M1520.0 441.3H1526.0M1526.0 441.3H1539.0M1538.0 434.8H1545.0M1544.0 431.6H1551.0M1550.0 421.8H1563.0M1562.0 438.1H1580.0M1580.0 438.1H1592.0M1592.0 438.1H1598.0M1598.0 438.1H1611.0M1610.0 447.8H1617.0M1616.0 438.1H1622.0M1622.0 438.1H1634.0M1634.0 438.1H1652.0M1652.0 438.1H1658.0M1658.0 438.1H1671.0M1670.0 428.3H1683.0M1682.0 421.8H1695.0M1694.0 438.1H1702.4" stroke="#fff0c0" stroke-width="2" fill="none"/><path d="M700.0 440.6L709.0 451.1L700.0 461.6ZM716.0 440.6L725.0 451.1L716.0 461.6ZM728.0 440.6L737.0 451.1L728.0 461.6ZM734.0 440.6L743.0 451.1L734.0 461.6ZM746.0 443.8L755.0 454.3L746.0 464.8ZM752.0 443.5L759.2 451.1L752.0 458.6ZM758.0 434.1L767.0 444.6L758.0 455.1ZM770.0 440.6L779.0 451.1L770.0 461.6ZM788.0 440.6L797.0 451.1L788.0 461.6ZM800.0 440.6L809.0 451.1L800.0 461.6ZM806.0 440.6L815.0 451.1L806.0 461.6ZM818.0 443.8L827.0 454.3L818.0 464.8ZM824.0 440.6L833.0 451.1L824.0 461.6ZM830.0 421.1L839.0 431.6L830.0 442.1ZM836.0 420.7L843.2 428.3L836.0 435.9ZM842.0 424.3L851.0 434.8L842.0 445.3ZM860.0 424.3L869.0 434.8L860.0 445.3ZM872.0 424.3L881.0 434.8L872.0 445.3ZM878.0 424.3L887.0 434.8L878.0 445.3ZM890.0 424.3L899.0 434.8L890.0 445.3ZM896.0 424.0L903.2 431.6L896.0 439.1ZM902.0 417.8L911.0 428.3L902.0 438.8ZM914.0 424.3L923.0 434.8L914.0 445.3ZM932.0 424.3L941.0 434.8L932.0 445.3ZM944.0 424.3L953.0 434.8L944.0 445.3ZM950.0 424.3L959.0 434.8L950.0 445.3ZM962.0 424.3L971.0 434.8L962.0 445.3ZM968.0 430.8L977.0 441.3L968.0 451.8ZM974.0 434.1L983.0 444.6L974.0 455.1ZM986.0 440.6L995.0 451.1L986.0 461.6ZM1004.0 440.6L1013.0 451.1L1004.0 461.6ZM1016.0 443.5L1023.2 451.1L1016.0 458.6ZM1022.0 443.8L1031.0 454.3L1022.0 464.8ZM1034.0 434.1L1043.0 444.6L1034.0 455.1ZM1046.0 437.3L1055.0 447.8L1046.0 458.3ZM1058.0 440.6L1067.0 451.1L1058.0 461.6ZM1076.0 440.6L1085.0 451.1L1076.0 461.6ZM1082.0 427.6L1091.0 438.1L1082.0 448.6ZM1106.0 417.8L1115.0 428.3L1106.0 438.8ZM1118.0 421.1L1127.0 431.6L1118.0 442.1ZM1130.0 424.3L1139.0 434.8L1130.0 445.3ZM1148.0 424.3L1157.0 434.8L1148.0 445.3ZM1160.0 424.3L1169.0 434.8L1160.0 445.3ZM1166.0 424.3L1175.0 434.8L1166.0 445.3ZM1178.0 421.1L1187.0 431.6L1178.0 442.1ZM1184.0 417.8L1193.0 428.3L1184.0 438.8ZM1196.0 420.7L1203.2 428.3L1196.0 435.9ZM1202.0 424.3L1211.0 434.8L1202.0 445.3ZM1220.0 424.3L1229.0 434.8L1220.0 445.3ZM1232.0 427.2L1239.2 434.8L1232.0 442.4ZM1238.0 424.3L1247.0 434.8L1238.0 445.3ZM1250.0 434.1L1259.0 444.6L1250.0 455.1ZM1256.0 430.8L1265.0 441.3L1256.0 451.8ZM1268.0 434.1L1277.0 444.6L1268.0 455.1ZM1274.0 427.6L1283.0 438.1L1274.0 448.6ZM1292.0 427.6L1301.0 438.1L1292.0 448.6ZM1304.0 430.5L1311.2 438.1L1304.0 445.6ZM1310.0 427.6L1319.0 438.1L1310.0 448.6ZM1322.0 430.8L1331.0 441.3L1322.0 451.8ZM1328.0 427.6L1337.0 438.1L1328.0 448.6ZM1334.0 421.1L1343.0 431.6L1334.0 442.1ZM1346.0 427.6L1355.0 438.1L1346.0 448.6ZM1364.0 427.6L1373.0 438.1L1364.0 448.6ZM1376.0 430.5L1383.2 438.1L1376.0 445.6ZM1382.0 427.6L1391.0 438.1L1382.0 448.6ZM1394.0 437.3L1403.0 447.8L1394.0 458.3ZM1400.0 427.6L1409.0 438.1L1400.0 448.6ZM1406.0 417.8L1415.0 428.3L1406.0 438.8ZM1418.0 430.8L1427.0 441.3L1418.0 451.8ZM1436.0 430.8L1445.0 441.3L1436.0 451.8ZM1448.0 433.7L1455.2 441.3L1448.0 448.9ZM1454.0 430.8L1463.0 441.3L1454.0 451.8ZM1466.0 434.1L1475.0 444.6L1466.0 455.1ZM1472.0 434.1L1481.0 444.6L1472.0 455.1ZM1478.0 430.8L1487.0 441.3L1478.0 451.8ZM1484.0 424.3L1493.0 434.8L1484.0 445.3ZM1490.0 430.8L1499.0 441.3L1490.0 451.8ZM1508.0 430.8L1517.0 441.3L1508.0 451.8ZM1520.0 430.8L1529.0 441.3L1520.0 451.8ZM1526.0 430.8L1535.0 441.3L1526.0 451.8ZM1538.0 424.3L1547.0 434.8L1538.0 445.3ZM1544.0 424.0L1551.2 431.6L1544.0 439.1ZM1550.0 411.3L1559.0 421.8L1550.0 432.3ZM1562.0 427.6L1571.0 438.1L1562.0 448.6ZM1580.0 427.6L1589.0 438.1L1580.0 448.6ZM1592.0 427.6L1601.0 438.1L1592.0 448.6ZM1598.0 427.6L1607.0 438.1L1598.0 448.6ZM1610.0 437.3L1619.0 447.8L1610.0 458.3ZM1616.0 427.6L1625.0 438.1L1616.0 448.6ZM1622.0 427.6L1631.0 438.1L1622.0 448.6ZM1634.0 427.6L1643.0 438.1L1634.0 448.6ZM1652.0 427.6L1661.0 438.1L1652.0 448.6ZM1658.0 427.6L1667.0 438.1L1658.0 448.6ZM1670.0 417.8L1679.0 428.3L1670.0 438.8ZM1682.0 411.3L1691.0 421.8L1682.0 432.3ZM1694.0 427.6L1703.0 438.1L1694.0 448.6Z" fill="#fff0c0"/><rect x="697.9" y="491.9" width="1010.6000000000001" height="128.2" rx="8" fill="#000"/><rect x="700" y="494" width="1006.4000000000001" height="124" rx="6" fill="#c4a63a"/><g clip-path="url(#rc)"><path d="M700.0 593.2H770.0M782.0 593.2H852.0M912.0 593.2H942.0M954.0 593.2H1018.0M1024.0 593.2H1054.0M1114.0 593.2H1138.0M1150.0 593.2H1214.0M1217.0 593.2H1287.0M1317.0 593.2H1381.0M1384.0 593.2H1414.0M1417.0 593.2H1447.0M1507.0 593.2H1577.0M1589.0 593.2H1613.0M1619.0 593.2H1649.0M1652.0 593.2H1682.0M1685.0 593.2H1702.4M840.0 583H904.0M934.0 583H1024.0M1030.0 583H1050.0M1062.0 583H1082.0M1112.0 583H1202.0M1232.0 583H1268.0M1272.0 583H1302.0M1308.0 583H1328.0M1340.0 583H1360.0M1366.0 583H1402.0M1414.0 583H1478.0M1490.0 583H1520.0M1526.0 583H1616.0M1622.0 583H1642.0M1648.0 583H1684.0M713.5 554.5h6M713.5 558.5h13M730.5 551.2h6M730.5 555.2h6M748.5 544.1h10M748.5 554.1h13M754.5 562.4h8M765.5 559.0h13M776.5 545.0h6M776.5 551.0h10M776.5 556.0h6M788.5 557.3h10M794.5 557.8h6M800.5 564.4h10M818.5 557.3h10M824.5 556.4h6M824.5 564.4h10M852.5 558.6h6M852.5 562.6h13M886.5 572.9h13M892.5 561.4h13M892.5 566.4h13M898.5 554.8h6M898.5 560.8h10M904.5 558.2h13M904.5 570.2h8M904.5 576.2h8M916.5 570.3h10M927.5 567.4h6M933.5 556.6h13M957.5 563.0h10M957.5 569.0h13M969.5 566.4h8M969.5 572.4h6M969.5 575.4h10M981.5 560.4h8M1010.5 565.0h8M1010.5 569.0h8M1016.5 568.8h13M1040.5 557.1h8M1040.5 569.1h10M1046.5 554.1h6M1046.5 560.1h10M1063.5 547.6h13M1063.5 565.6h8M1069.5 558.1h6M1069.5 568.1h10M1086.5 566.2h6M1092.5 562.8h10M1092.5 568.8h6M1098.5 565.7h6M1104.5 567.9h8M1110.5 556.1h10M1116.5 558.7h8M1127.5 575.5h10M1127.5 578.5h8M1133.5 575.4h6M1139.5 571.1h13M1139.5 581.1h13M1151.5 560.4h8M1179.5 567.4h6M1179.5 575.4h6M1185.5 570.4h10M1191.5 571.4h10M1203.5 579.8h6M1242.5 561.2h8M1242.5 566.2h10M1254.5 569.3h6M1260.5 568.2h13M1266.5 569.9h13M1272.5 561.2h8M1272.5 567.2h10M1272.5 569.2h13M1272.5 579.2h10M1278.5 561.5h6M1278.5 565.5h10M1295.5 558.0h8M1306.5 565.2h6M1312.5 561.8h10M1324.5 583.0h13M1330.5 574.0h6M1336.5 580.5h8M1342.5 572.1h8M1370.5 577.0h8M1370.5 580.0h6M1381.5 566.5h6M1381.5 574.5h8M1381.5 581.5h8M1387.5 566.7h6M1393.5 560.9h10M1393.5 572.9h10M1404.5 566.6h6M1404.5 570.6h8M1404.5 574.6h13M1410.5 572.8h10M1410.5 574.8h10M1416.5 566.8h6M1422.5 559.6h6M1422.5 564.6h10M1434.5 552.2h13M1440.5 562.3h8M1446.5 573.7h13M1446.5 578.7h13M1452.5 565.5h10M1452.5 571.5h6M1458.5 567.2h6M1458.5 570.2h8M1458.5 580.2h8M1469.5 571.9h10M1469.5 577.9h8M1480.5 566.3h13M1480.5 571.3h10M1503.5 571.2h6M1503.5 575.2h10M1514.5 572.0h10M1514.5 576.0h13M1520.5 576.0h6M1526.5 565.8h6M1526.5 569.8h10M1526.5 577.8h8M1532.5 565.8h10M1532.5 570.8h10M1538.5 571.8h10M1567.5 552.4h8M1567.5 558.4h8M1567.5 560.4h8M1567.5 564.4h8M1573.5 558.8h8M1573.5 563.8h6M1596.5 556.4h6M1619.5 557.7h6M1619.5 563.7h10M1631.5 555.4h10M1643.5 556.5h8M1643.5 566.5h10M1649.5 562.7h10M1649.5 567.7h6M1655.5 568.3h6M1655.5 573.3h10M1666.5 564.7h10M1678.5 563.0h10M1678.5 568.0h6M1690.5 564.4h6" stroke="#fff0c0" stroke-width="1.8" fill="none"/><path d="M700.0 586.7L707.5 593.2L700.0 599.7ZM782.0 586.7L789.5 593.2L782.0 599.7ZM912.0 586.7L919.5 593.2L912.0 599.7ZM954.0 586.7L961.5 593.2L954.0 599.7ZM1024.0 586.7L1031.5 593.2L1024.0 599.7ZM1114.0 586.7L1121.5 593.2L1114.0 599.7ZM1150.0 586.7L1157.5 593.2L1150.0 599.7ZM1217.0 586.7L1224.5 593.2L1217.0 599.7ZM1317.0 586.7L1324.5 593.2L1317.0 599.7ZM1384.0 586.7L1391.5 593.2L1384.0 599.7ZM1417.0 586.7L1424.5 593.2L1417.0 599.7ZM1507.0 586.7L1514.5 593.2L1507.0 599.7ZM1589.0 586.7L1596.5 593.2L1589.0 599.7ZM1619.0 586.7L1626.5 593.2L1619.0 599.7ZM1652.0 586.7L1659.5 593.2L1652.0 599.7ZM1685.0 586.7L1692.5 593.2L1685.0 599.7ZM840.0 575.5L848.0 583L840.0 590.5ZM934.0 575.5L942.0 583L934.0 590.5ZM1030.0 575.5L1038.0 583L1030.0 590.5ZM1062.0 575.5L1070.0 583L1062.0 590.5ZM1112.0 575.5L1120.0 583L1112.0 590.5ZM1232.0 575.5L1240.0 583L1232.0 590.5ZM1272.0 575.5L1280.0 583L1272.0 590.5ZM1308.0 575.5L1316.0 583L1308.0 590.5ZM1340.0 575.5L1348.0 583L1340.0 590.5ZM1366.0 575.5L1374.0 583L1366.0 590.5ZM1414.0 575.5L1422.0 583L1414.0 590.5ZM1490.0 575.5L1498.0 583L1490.0 590.5ZM1526.0 575.5L1534.0 583L1526.0 590.5ZM1622.0 575.5L1630.0 583L1622.0 590.5ZM1648.0 575.5L1656.0 583L1648.0 590.5ZM700.5 550.6L707.1 557.6L700.5 564.6ZM700.5 556.6L707.1 563.6L700.5 570.6ZM711.5 549.3L716.4 554.5L711.5 559.7ZM711.5 553.3L716.4 558.5L711.5 563.7ZM711.5 557.3L716.4 562.5L711.5 567.7ZM728.5 544.2L735.1 551.2L728.5 558.2ZM728.5 548.2L735.1 555.2L728.5 562.2ZM728.5 552.2L735.1 559.2L728.5 566.2ZM734.5 544.2L741.7 551.8L734.5 559.4ZM734.5 548.2L741.7 555.8L734.5 563.4ZM734.5 554.2L741.7 561.8L734.5 569.4ZM740.5 552.1L747.1 559.1L740.5 566.1ZM740.5 556.1L747.1 563.1L740.5 570.1ZM746.5 536.1L754.1 544.1L746.5 552.1ZM746.5 540.1L754.1 548.1L746.5 556.1ZM746.5 546.1L754.1 554.1L746.5 562.1ZM752.5 552.2L757.4 557.4L752.5 562.6ZM752.5 557.2L757.4 562.4L752.5 567.6ZM763.5 549.8L768.4 555.0L763.5 560.2ZM763.5 553.8L768.4 559.0L763.5 564.2ZM774.5 533.0L782.1 541.0L774.5 549.0ZM774.5 537.0L782.1 545.0L774.5 553.0ZM774.5 543.0L782.1 551.0L774.5 559.0ZM774.5 548.0L782.1 556.0L774.5 564.0ZM780.5 550.0L787.7 557.6L780.5 565.2ZM780.5 555.0L787.7 562.6L780.5 570.2ZM786.5 550.3L793.1 557.3L786.5 564.3ZM786.5 555.3L793.1 562.3L786.5 569.3ZM786.5 560.3L793.1 567.3L786.5 574.3ZM792.5 550.8L799.1 557.8L792.5 564.8ZM792.5 555.8L799.1 562.8L792.5 569.8ZM792.5 562.8L799.1 569.8L792.5 576.8ZM792.5 565.8L799.1 572.8L792.5 579.8ZM798.5 555.2L803.4 560.4L798.5 565.6ZM798.5 559.2L803.4 564.4L798.5 569.6ZM798.5 563.2L803.4 568.4L798.5 573.6ZM798.5 567.2L803.4 572.4L798.5 577.6ZM804.5 556.0L809.4 561.2L804.5 566.4ZM804.5 561.0L809.4 566.2L804.5 571.4ZM810.5 551.8L818.1 559.8L810.5 567.8ZM810.5 555.8L818.1 563.8L810.5 571.8ZM810.5 561.8L818.1 569.8L810.5 577.8ZM816.5 549.3L824.1 557.3L816.5 565.3ZM816.5 553.3L824.1 561.3L816.5 569.3ZM816.5 557.3L824.1 565.3L816.5 573.3ZM822.5 548.4L830.1 556.4L822.5 564.4ZM822.5 553.4L830.1 561.4L822.5 569.4ZM822.5 556.4L830.1 564.4L822.5 572.4ZM839.5 562.6L844.4 567.8L839.5 573.0ZM839.5 566.6L844.4 571.8L839.5 577.0ZM850.5 551.0L857.7 558.6L850.5 566.2ZM850.5 555.0L857.7 562.6L850.5 570.2ZM850.5 559.0L857.7 566.6L850.5 574.2ZM850.5 569.0L857.7 576.6L850.5 584.2ZM861.5 551.5L868.1 558.5L861.5 565.5ZM861.5 556.5L868.1 563.5L861.5 570.5ZM867.5 557.9L872.4 563.1L867.5 568.3ZM867.5 563.9L872.4 569.1L867.5 574.3ZM873.5 551.8L881.1 559.8L873.5 567.8ZM873.5 557.8L881.1 565.8L873.5 573.8ZM873.5 559.8L881.1 567.8L873.5 575.8ZM884.5 553.9L891.1 560.9L884.5 567.9ZM884.5 558.9L891.1 565.9L884.5 572.9ZM884.5 565.9L891.1 572.9L884.5 579.9ZM884.5 565.9L891.1 572.9L884.5 579.9ZM890.5 551.2L895.4 556.4L890.5 561.6ZM890.5 556.2L895.4 561.4L890.5 566.6ZM890.5 561.2L895.4 566.4L890.5 571.6ZM890.5 566.2L895.4 571.4L890.5 576.6ZM896.5 549.6L901.4 554.8L896.5 560.0ZM896.5 555.6L901.4 560.8L896.5 566.0ZM896.5 557.6L901.4 562.8L896.5 568.0ZM902.5 550.2L910.1 558.2L902.5 566.2ZM902.5 556.2L910.1 564.2L902.5 572.2ZM902.5 562.2L910.1 570.2L902.5 578.2ZM902.5 568.2L910.1 576.2L902.5 584.2ZM908.5 562.3L915.7 569.9L908.5 577.5ZM908.5 566.3L915.7 573.9L908.5 581.5ZM914.5 554.7L921.7 562.3L914.5 569.9ZM914.5 560.7L921.7 568.3L914.5 575.9ZM914.5 562.7L921.7 570.3L914.5 577.9ZM925.5 554.8L932.7 562.4L925.5 570.0ZM925.5 559.8L932.7 567.4L925.5 575.0ZM925.5 566.8L932.7 574.4L925.5 582.0ZM925.5 572.8L932.7 580.4L925.5 588.0ZM931.5 544.6L939.1 552.6L931.5 560.6ZM931.5 548.6L939.1 556.6L931.5 564.6ZM937.5 558.0L942.4 563.2L937.5 568.4ZM937.5 563.0L942.4 568.2L937.5 573.4ZM937.5 568.0L942.4 573.2L937.5 578.4ZM943.5 554.1L951.1 562.1L943.5 570.1ZM943.5 558.1L951.1 566.1L943.5 574.1ZM943.5 564.1L951.1 572.1L943.5 580.1ZM949.5 553.5L956.7 561.1L949.5 568.7ZM949.5 558.5L956.7 566.1L949.5 573.7ZM955.5 552.0L962.1 559.0L955.5 566.0ZM955.5 556.0L962.1 563.0L955.5 570.0ZM955.5 562.0L962.1 569.0L955.5 576.0ZM967.5 555.2L972.4 560.4L967.5 565.6ZM967.5 561.2L972.4 566.4L967.5 571.6ZM967.5 567.2L972.4 572.4L967.5 577.6ZM967.5 570.2L972.4 575.4L967.5 580.6ZM979.5 552.4L987.1 560.4L979.5 568.4ZM979.5 557.4L987.1 565.4L979.5 573.4ZM985.5 555.0L993.1 563.0L985.5 571.0ZM985.5 561.0L993.1 569.0L985.5 577.0ZM985.5 567.0L993.1 575.0L985.5 583.0ZM991.5 558.4L998.7 566.0L991.5 573.6ZM991.5 562.4L998.7 570.0L991.5 577.6ZM1002.5 553.3L1009.7 560.9L1002.5 568.5ZM1002.5 559.3L1009.7 566.9L1002.5 574.5ZM1008.5 559.8L1013.4 565.0L1008.5 570.2ZM1008.5 563.8L1013.4 569.0L1008.5 574.2ZM1014.5 555.2L1021.7 562.8L1014.5 570.4ZM1014.5 561.2L1021.7 568.8L1014.5 576.4ZM1014.5 563.2L1021.7 570.8L1014.5 578.4ZM1014.5 570.2L1021.7 577.8L1014.5 585.4ZM1020.5 553.8L1027.2 560.8L1020.5 567.8ZM1020.5 559.8L1027.2 566.8L1020.5 573.8ZM1020.5 561.8L1027.2 568.8L1020.5 575.8ZM1020.5 565.8L1027.2 572.8L1020.5 579.8ZM1026.5 549.2L1031.4 554.4L1026.5 559.6ZM1026.5 553.2L1031.4 558.4L1026.5 563.6ZM1032.5 556.7L1039.7 564.3L1032.5 571.9ZM1032.5 561.7L1039.7 569.3L1032.5 576.9ZM1038.5 550.1L1045.2 557.1L1038.5 564.1ZM1038.5 555.1L1045.2 562.1L1038.5 569.1ZM1038.5 562.1L1045.2 569.1L1038.5 576.1ZM1044.5 546.5L1051.7 554.1L1044.5 561.7ZM1044.5 552.5L1051.7 560.1L1044.5 567.7ZM1044.5 556.5L1051.7 564.1L1044.5 571.7ZM1050.5 552.0L1057.7 559.6L1050.5 567.2ZM1050.5 557.0L1057.7 564.6L1050.5 572.2ZM1061.5 540.0L1068.7 547.6L1061.5 555.2ZM1061.5 544.0L1068.7 551.6L1061.5 559.2ZM1061.5 550.0L1068.7 557.6L1061.5 565.2ZM1061.5 558.0L1068.7 565.6L1061.5 573.2ZM1067.5 551.1L1074.2 558.1L1067.5 565.1ZM1067.5 557.1L1074.2 564.1L1067.5 571.1ZM1067.5 561.1L1074.2 568.1L1067.5 575.1ZM1078.5 547.0L1085.2 554.0L1078.5 561.0ZM1078.5 553.0L1085.2 560.0L1078.5 567.0ZM1084.5 546.6L1091.7 554.2L1084.5 561.8ZM1084.5 551.6L1091.7 559.2L1084.5 566.8ZM1084.5 558.6L1091.7 566.2L1084.5 573.8ZM1090.5 555.8L1097.2 562.8L1090.5 569.8ZM1090.5 561.8L1097.2 568.8L1090.5 575.8ZM1096.5 553.1L1103.7 560.7L1096.5 568.3ZM1096.5 558.1L1103.7 565.7L1096.5 573.3ZM1102.5 556.9L1109.2 563.9L1102.5 570.9ZM1102.5 560.9L1109.2 567.9L1102.5 574.9ZM1108.5 549.1L1115.2 556.1L1108.5 563.1ZM1108.5 555.1L1115.2 562.1L1108.5 569.1ZM1108.5 561.1L1115.2 568.1L1108.5 575.1ZM1114.5 551.7L1121.2 558.7L1114.5 565.7ZM1114.5 556.7L1121.2 563.7L1114.5 570.7ZM1114.5 563.7L1121.2 570.7L1114.5 577.7ZM1125.5 562.9L1132.7 570.5L1125.5 578.1ZM1125.5 567.9L1132.7 575.5L1125.5 583.1ZM1125.5 570.9L1132.7 578.5L1125.5 586.1ZM1131.5 562.2L1136.4 567.4L1131.5 572.6ZM1131.5 566.2L1136.4 571.4L1131.5 576.6ZM1131.5 570.2L1136.4 575.4L1131.5 580.6ZM1131.5 577.2L1136.4 582.4L1131.5 587.6ZM1137.5 559.1L1144.2 566.1L1137.5 573.1ZM1137.5 564.1L1144.2 571.1L1137.5 578.1ZM1137.5 571.1L1144.2 578.1L1137.5 585.1ZM1137.5 574.1L1144.2 581.1L1137.5 588.1ZM1143.5 559.6L1151.1 567.6L1143.5 575.6ZM1143.5 563.6L1151.1 571.6L1143.5 579.6ZM1149.5 553.4L1156.2 560.4L1149.5 567.4ZM1149.5 558.4L1156.2 565.4L1149.5 572.4ZM1171.5 568.2L1176.4 573.4L1171.5 578.6ZM1171.5 574.2L1176.4 579.4L1171.5 584.6ZM1177.5 562.2L1182.4 567.4L1177.5 572.6ZM1177.5 567.2L1182.4 572.4L1177.5 577.6ZM1177.5 570.2L1182.4 575.4L1177.5 580.6ZM1177.5 574.2L1182.4 579.4L1177.5 584.6ZM1183.5 563.4L1190.2 570.4L1183.5 577.4ZM1183.5 568.4L1190.2 575.4L1183.5 582.4ZM1183.5 575.4L1190.2 582.4L1183.5 589.4ZM1189.5 557.8L1196.7 565.4L1189.5 573.0ZM1189.5 563.8L1196.7 571.4L1189.5 579.0ZM1189.5 567.8L1196.7 575.4L1189.5 583.0ZM1189.5 575.4L1196.7 583.0L1189.5 590.6ZM1195.5 563.7L1203.1 571.7L1195.5 579.7ZM1195.5 569.7L1203.1 577.7L1195.5 585.7ZM1201.5 566.8L1208.2 573.8L1201.5 580.8ZM1201.5 572.8L1208.2 579.8L1201.5 586.8ZM1212.5 556.4L1220.1 564.4L1212.5 572.4ZM1212.5 560.4L1220.1 568.4L1212.5 576.4ZM1223.5 557.3L1230.2 564.3L1223.5 571.3ZM1223.5 562.3L1230.2 569.3L1223.5 576.3ZM1229.5 555.4L1237.1 563.4L1229.5 571.4ZM1229.5 561.4L1237.1 569.4L1229.5 577.4ZM1240.5 556.0L1245.4 561.2L1240.5 566.4ZM1240.5 561.0L1245.4 566.2L1240.5 571.4ZM1240.5 564.0L1245.4 569.2L1240.5 574.4ZM1246.5 553.2L1253.7 560.8L1246.5 568.4ZM1246.5 558.2L1253.7 565.8L1246.5 573.4ZM1246.5 563.2L1253.7 570.8L1246.5 578.4ZM1252.5 556.1L1257.4 561.3L1252.5 566.5ZM1252.5 561.1L1257.4 566.3L1252.5 571.5ZM1252.5 564.1L1257.4 569.3L1252.5 574.5ZM1258.5 560.6L1265.7 568.2L1258.5 575.8ZM1258.5 564.6L1265.7 572.2L1258.5 579.8ZM1258.5 570.6L1265.7 578.2L1258.5 585.8ZM1264.5 556.3L1271.7 563.9L1264.5 571.5ZM1264.5 562.3L1271.7 569.9L1264.5 577.5ZM1264.5 568.3L1271.7 575.9L1264.5 583.5ZM1264.5 568.3L1271.7 575.9L1264.5 583.5ZM1270.5 554.2L1277.2 561.2L1270.5 568.2ZM1270.5 560.2L1277.2 567.2L1270.5 574.2ZM1270.5 562.2L1277.2 569.2L1270.5 576.2ZM1270.5 572.2L1277.2 579.2L1270.5 586.2ZM1276.5 549.9L1283.7 557.5L1276.5 565.1ZM1276.5 553.9L1283.7 561.5L1276.5 569.1ZM1276.5 557.9L1283.7 565.5L1276.5 573.1ZM1287.5 543.5L1295.1 551.5L1287.5 559.5ZM1287.5 548.5L1295.1 556.5L1287.5 564.5ZM1287.5 553.5L1295.1 561.5L1287.5 569.5ZM1287.5 558.5L1295.1 566.5L1287.5 574.5ZM1293.5 546.0L1300.2 553.0L1293.5 560.0ZM1293.5 551.0L1300.2 558.0L1293.5 565.0ZM1293.5 558.0L1300.2 565.0L1293.5 572.0ZM1304.5 557.6L1311.7 565.2L1304.5 572.8ZM1304.5 562.6L1311.7 570.2L1304.5 577.8ZM1304.5 567.6L1311.7 575.2L1304.5 582.8ZM1304.5 569.6L1311.7 577.2L1304.5 584.8ZM1310.5 553.8L1318.1 561.8L1310.5 569.8ZM1310.5 559.8L1318.1 567.8L1310.5 575.8ZM1310.5 561.8L1318.1 569.8L1310.5 577.8ZM1316.5 544.9L1323.7 552.5L1316.5 560.1ZM1316.5 549.9L1323.7 557.5L1316.5 565.1ZM1316.5 552.9L1323.7 560.5L1316.5 568.1ZM1316.5 562.9L1323.7 570.5L1316.5 578.1ZM1322.5 563.8L1327.4 569.0L1322.5 574.2ZM1322.5 569.8L1327.4 575.0L1322.5 580.2ZM1322.5 573.8L1327.4 579.0L1322.5 584.2ZM1322.5 577.8L1327.4 583.0L1322.5 588.2ZM1328.5 564.8L1333.4 570.0L1328.5 575.2ZM1328.5 568.8L1333.4 574.0L1328.5 579.2ZM1328.5 576.8L1333.4 582.0L1328.5 587.2ZM1334.5 569.3L1339.4 574.5L1334.5 579.7ZM1334.5 575.3L1339.4 580.5L1334.5 585.7ZM1340.5 560.5L1347.7 568.1L1340.5 575.7ZM1340.5 564.5L1347.7 572.1L1340.5 579.7ZM1340.5 568.5L1347.7 576.1L1340.5 583.7ZM1340.5 575.4L1347.7 583.0L1340.5 590.6ZM1351.5 552.5L1359.1 560.5L1351.5 568.5ZM1351.5 558.5L1359.1 566.5L1351.5 574.5ZM1351.5 560.5L1359.1 568.5L1351.5 576.5ZM1357.5 558.4L1364.2 565.4L1357.5 572.4ZM1357.5 562.4L1364.2 569.4L1357.5 576.4ZM1357.5 570.4L1364.2 577.4L1357.5 584.4ZM1368.5 566.8L1373.4 572.0L1368.5 577.2ZM1368.5 571.8L1373.4 577.0L1368.5 582.2ZM1368.5 574.8L1373.4 580.0L1368.5 585.2ZM1379.5 559.5L1386.2 566.5L1379.5 573.5ZM1379.5 563.5L1386.2 570.5L1379.5 577.5ZM1379.5 567.5L1386.2 574.5L1379.5 581.5ZM1379.5 574.5L1386.2 581.5L1379.5 588.5ZM1385.5 558.7L1393.1 566.7L1385.5 574.7ZM1385.5 562.7L1393.1 570.7L1385.5 578.7ZM1385.5 568.7L1393.1 576.7L1385.5 584.7ZM1391.5 552.9L1399.1 560.9L1391.5 568.9ZM1391.5 556.9L1399.1 564.9L1391.5 572.9ZM1391.5 564.9L1399.1 572.9L1391.5 580.9ZM1391.5 564.9L1399.1 572.9L1391.5 580.9ZM1402.5 558.6L1410.1 566.6L1402.5 574.6ZM1402.5 562.6L1410.1 570.6L1402.5 578.6ZM1402.5 566.6L1410.1 574.6L1402.5 582.6ZM1408.5 554.8L1416.1 562.8L1408.5 570.8ZM1408.5 560.8L1416.1 568.8L1408.5 576.8ZM1408.5 564.8L1416.1 572.8L1408.5 580.8ZM1408.5 566.8L1416.1 574.8L1408.5 582.8ZM1414.5 559.2L1421.7 566.8L1414.5 574.4ZM1414.5 563.2L1421.7 570.8L1414.5 578.4ZM1420.5 551.6L1428.1 559.6L1420.5 567.6ZM1420.5 556.6L1428.1 564.6L1420.5 572.6ZM1420.5 561.6L1428.1 569.6L1420.5 577.6ZM1426.5 553.2L1433.7 560.8L1426.5 568.4ZM1426.5 558.2L1433.7 565.8L1426.5 573.4ZM1426.5 563.2L1433.7 570.8L1426.5 578.4ZM1432.5 545.2L1439.2 552.2L1432.5 559.2ZM1432.5 550.2L1439.2 557.2L1432.5 564.2ZM1438.5 557.1L1443.4 562.3L1438.5 567.5ZM1438.5 563.1L1443.4 568.3L1438.5 573.5ZM1444.5 556.7L1451.2 563.7L1444.5 570.7ZM1444.5 562.7L1451.2 569.7L1444.5 576.7ZM1444.5 566.7L1451.2 573.7L1444.5 580.7ZM1444.5 571.7L1451.2 578.7L1444.5 585.7ZM1450.5 557.9L1457.7 565.5L1450.5 573.1ZM1450.5 563.9L1457.7 571.5L1450.5 579.1ZM1450.5 569.9L1457.7 577.5L1450.5 585.1ZM1456.5 557.0L1461.4 562.2L1456.5 567.4ZM1456.5 562.0L1461.4 567.2L1456.5 572.4ZM1456.5 565.0L1461.4 570.2L1456.5 575.4ZM1456.5 575.0L1461.4 580.2L1456.5 585.4ZM1467.5 551.9L1475.1 559.9L1467.5 567.9ZM1467.5 557.9L1475.1 565.9L1467.5 573.9ZM1467.5 563.9L1475.1 571.9L1467.5 579.9ZM1467.5 569.9L1475.1 577.9L1467.5 585.9ZM1478.5 561.1L1483.4 566.3L1478.5 571.5ZM1478.5 566.1L1483.4 571.3L1478.5 576.5ZM1478.5 571.1L1483.4 576.3L1478.5 581.5ZM1489.5 556.6L1497.1 564.6L1489.5 572.6ZM1489.5 560.6L1497.1 568.6L1489.5 576.6ZM1489.5 566.6L1497.1 574.6L1489.5 582.6ZM1495.5 563.7L1500.4 568.9L1495.5 574.1ZM1495.5 567.7L1500.4 572.9L1495.5 578.1ZM1501.5 559.6L1508.7 567.2L1501.5 574.8ZM1501.5 563.6L1508.7 571.2L1501.5 578.8ZM1501.5 567.6L1508.7 575.2L1501.5 582.8ZM1512.5 564.0L1520.1 572.0L1512.5 580.0ZM1512.5 568.0L1520.1 576.0L1512.5 584.0ZM1512.5 572.0L1520.1 580.0L1512.5 588.0ZM1518.5 565.0L1525.2 572.0L1518.5 579.0ZM1518.5 569.0L1525.2 576.0L1518.5 583.0ZM1524.5 558.8L1531.2 565.8L1524.5 572.8ZM1524.5 562.8L1531.2 569.8L1524.5 576.8ZM1524.5 570.8L1531.2 577.8L1524.5 584.8ZM1530.5 558.2L1537.7 565.8L1530.5 573.4ZM1530.5 563.2L1537.7 570.8L1530.5 578.4ZM1530.5 566.2L1537.7 573.8L1530.5 581.4ZM1536.5 564.8L1543.2 571.8L1536.5 578.8ZM1536.5 568.8L1543.2 575.8L1536.5 582.8ZM1548.5 562.1L1556.1 570.1L1548.5 578.1ZM1548.5 567.1L1556.1 575.1L1548.5 583.1ZM1548.5 574.1L1556.1 582.1L1548.5 590.1ZM1559.5 564.8L1566.7 572.4L1559.5 580.0ZM1559.5 569.8L1566.7 577.4L1559.5 585.0ZM1565.5 547.2L1570.4 552.4L1565.5 557.6ZM1565.5 553.2L1570.4 558.4L1565.5 563.6ZM1565.5 555.2L1570.4 560.4L1565.5 565.6ZM1565.5 559.2L1570.4 564.4L1565.5 569.6ZM1571.5 553.6L1576.4 558.8L1571.5 564.0ZM1571.5 558.6L1576.4 563.8L1571.5 569.0ZM1571.5 565.6L1576.4 570.8L1571.5 576.0ZM1577.5 544.5L1584.2 551.5L1577.5 558.5ZM1577.5 549.5L1584.2 556.5L1577.5 563.5ZM1577.5 554.5L1584.2 561.5L1577.5 568.5ZM1583.5 552.5L1591.1 560.5L1583.5 568.5ZM1583.5 558.5L1591.1 566.5L1583.5 574.5ZM1594.5 548.8L1601.7 556.4L1594.5 564.0ZM1594.5 554.8L1601.7 562.4L1594.5 570.0ZM1594.5 560.8L1601.7 568.4L1594.5 576.0ZM1600.5 552.2L1605.4 557.4L1600.5 562.6ZM1600.5 556.2L1605.4 561.4L1600.5 566.6ZM1600.5 564.2L1605.4 569.4L1600.5 574.6ZM1617.5 550.7L1624.2 557.7L1617.5 564.7ZM1617.5 556.7L1624.2 563.7L1617.5 570.7ZM1623.5 547.7L1631.1 555.7L1623.5 563.7ZM1623.5 552.7L1631.1 560.7L1623.5 568.7ZM1629.5 548.4L1636.2 555.4L1629.5 562.4ZM1629.5 552.4L1636.2 559.4L1629.5 566.4ZM1629.5 556.4L1636.2 563.4L1629.5 570.4ZM1629.5 560.4L1636.2 567.4L1629.5 574.4ZM1635.5 544.9L1642.2 551.9L1635.5 558.9ZM1635.5 550.9L1642.2 557.9L1635.5 564.9ZM1635.5 556.9L1642.2 563.9L1635.5 570.9ZM1641.5 548.9L1648.7 556.5L1641.5 564.1ZM1641.5 552.9L1648.7 560.5L1641.5 568.1ZM1641.5 558.9L1648.7 566.5L1641.5 574.1ZM1647.5 557.5L1652.4 562.7L1647.5 567.9ZM1647.5 562.5L1652.4 567.7L1647.5 572.9ZM1653.5 556.3L1660.2 563.3L1653.5 570.3ZM1653.5 561.3L1660.2 568.3L1653.5 575.3ZM1653.5 566.3L1660.2 573.3L1653.5 580.3ZM1664.5 553.1L1671.7 560.7L1664.5 568.3ZM1664.5 557.1L1671.7 564.7L1664.5 572.3ZM1676.5 557.8L1681.4 563.0L1676.5 568.2ZM1676.5 562.8L1681.4 568.0L1676.5 573.2ZM1682.5 553.6L1689.2 560.6L1682.5 567.6ZM1682.5 557.6L1689.2 564.6L1682.5 571.6ZM1688.5 538.4L1696.1 546.4L1688.5 554.4ZM1688.5 543.4L1696.1 551.4L1688.5 559.4ZM1688.5 546.4L1696.1 554.4L1688.5 562.4ZM1688.5 556.4L1696.1 564.4L1688.5 572.4ZM1694.5 548.5L1702.1 556.5L1694.5 564.5ZM1694.5 552.5L1702.1 560.5L1694.5 568.5Z" fill="#fff0c0"/></g></svg>
<span style="left:710.12px;top:111.38px;font-size:22px;line-height:22px;color:#fff;letter-spacing:0.453px;">TESTlogicSession</span>
<span style="left:710.12px;top:241.18px;font-size:22px;line-height:22px;color:#fff;letter-spacing:0.900px;">Drummer - Pop rock</span>
<span style="left:710.12px;top:371.18px;font-size:22px;line-height:22px;color:#5e4e10;letter-spacing:0.580px;">Bass Player - Pop rock</span>
<span style="left:710.12px;top:501.18px;font-size:22px;line-height:22px;color:#fff;letter-spacing:0.655px;">Keyboard Player - Libre</span>
<div style="left:1091.6px;top:76px;width:3.4px;height:554px;background:#fff;border-left:0.7px solid #333;border-right:0.7px solid #333;"></div>
<svg style="left:1074px;top:64px" width="38" height="40" viewBox="0 0 38 40"><path d="M2.2 9.5Q2.2 2.4 9 2.4H29Q35.8 2.4 35.8 9.5V20L19 35.6L2.2 20Z" fill="#bdbdbd" stroke="#3c3c3c" stroke-width="0.8"/><path d="M19 9V36" stroke="#fff" stroke-width="2"/></svg>
<div style="left:686px;top:638px;width:278px;height:16px;background:#777;border-radius:8px;"></div>
<div style="left:26px;top:660px;width:2554px;height:4px;background:#000;"></div>
<div style="left:30px;top:664px;width:2550px;height:920px;background:#474747;border:4px solid #8fbcf7;border-radius:0 0 14px 0;"></div>
<div style="left:34px;top:668px;width:2542px;height:1.2px;background:#2e2e2e;"></div>
<div style="left:34px;top:668px;width:1.2px;height:896px;background:#2e2e2e;"></div>
<div style="left:2575px;top:668px;width:1.2px;height:882px;background:#2e2e2e;"></div>
<span style="left:1217.89px;top:687.89px;font-size:26px;line-height:26px;color:#fff;letter-spacing:0.246px;">Session Player</span>
<div style="left:35px;top:738.5px;width:2540px;height:1.5px;background:#3f3f3f;"></div>
<div style="left:50px;top:756px;width:168px;height:40px;background:#5b5b5b;border-radius:9px;box-shadow:0 1px 2px rgba(0,0,0,.45);"></div>
<span style="left:69.46px;top:761.59px;font-size:26px;line-height:26px;color:#fff;letter-spacing:0.983px;">Accords</span>
<svg style="left:188px;top:768px" width="20" height="16" viewBox="0 0 20 16"><path d="M3 4.5L9.8 11L16.6 4.5" fill="none" stroke="#a8a8a8" stroke-width="2.3" stroke-linecap="round" stroke-linejoin="round"/></svg>
<span style="left:241.96px;top:761.59px;font-size:26px;line-height:26px;color:#a2a2a2;letter-spacing:0.379px;">Préréglage :</span>
<div style="left:394px;top:756px;width:674px;height:40px;background:#5b5b5b;border-radius:9px;box-shadow:0 1px 2px rgba(0,0,0,.45);"></div>
<span style="left:414.46px;top:761.59px;font-size:26px;line-height:26px;color:#fff;letter-spacing:0.394px;">Thrash Riot</span>
<svg style="left:1036px;top:760px" width="24" height="34" viewBox="0 0 24 34"><path d="M5 12.5L12 6L19 12.5M5 21.5L12 28L19 21.5" fill="none" stroke="#b0b0b0" stroke-width="2.3" stroke-linecap="round" stroke-linejoin="round"/></svg>
<div style="left:1220px;top:756px;width:170px;height:40px;background:#5b5b5b;border-radius:9px;box-shadow:0 1px 2px rgba(0,0,0,.45);"></div>
<div style="left:1304px;top:756px;width:1.5px;height:40px;background:#474747;"></div>
<svg style="left:1220px;top:756px" width="170" height="40" viewBox="0 0 170 40"><path d="M23.5 7.5V28.2L28.4 23.8L32.2 32.2L35.6 30.6L31.8 22.4L38 21.8Z" fill="#fff"/><path d="M54 16.5L59.8 22L65.6 16.5" fill="none" stroke="#a8a8a8" stroke-width="2.2" stroke-linecap="round" stroke-linejoin="round"/>
<path d="M108.4 28.6L124.6 12.4" stroke="#fff" stroke-width="3" stroke-linecap="round"/><circle cx="126.3" cy="10.8" r="1.4" fill="#fff"/><path d="M142 16.5L147.8 22L153.6 16.5" fill="none" stroke="#a8a8a8" stroke-width="2.2" stroke-linecap="round" stroke-linejoin="round"/></svg>
<span style="left:1811.46px;top:759.79px;font-size:26px;line-height:26px;color:#a2a2a2;letter-spacing:0.705px;">Magnétisme :</span>
<div style="left:1984px;top:754px;width:324px;height:40px;background:#5b5b5b;border-radius:9px;box-shadow:0 1px 2px rgba(0,0,0,.45);"></div>
<span style="left:2003.46px;top:759.79px;font-size:26px;line-height:26px;color:#fff;letter-spacing:1.060px;">Temps</span>
<svg style="left:2276px;top:758px" width="24" height="34" viewBox="0 0 24 34"><path d="M5 12.5L12 6L19 12.5M5 21.5L12 28L19 21.5" fill="none" stroke="#c0c0c0" stroke-width="2.3" stroke-linecap="round" stroke-linejoin="round"/></svg>
<div style="left:2326px;top:754px;width:66px;height:40px;background:#3b6fc0;border-radius:9px;box-shadow:0 1px 2px rgba(0,0,0,.45);"></div>
<svg style="left:2326px;top:754px" width="66" height="40" viewBox="0 0 66 40" fill="none" stroke="#fff" stroke-width="1.8" stroke-linecap="round" stroke-linejoin="round"><path d="M21.3 12.5V27.5M45 12.5V27.5M25.5 20H40.8M29.3 16.2L25.5 20L29.3 23.8M37 16.2L40.8 20L37 23.8"/></svg>
<div style="left:2406px;top:754px;width:148px;height:40px;background:#3d3d3d;border-radius:9px;"></div>
<svg style="left:2414px;top:762px" width="32" height="24" viewBox="0 0 32 24" fill="none" stroke="#b4b4b4" stroke-width="1.9" stroke-linecap="round" stroke-linejoin="round"><path d="M5 12H26M10 7L5 12L10 17M21 7L26 12L21 17"/></svg>
<div style="left:2452px;top:770px;width:94px;height:8px;background:#303030;border-radius:4px;"></div>
<div style="left:2481.5px;top:762px;width:24px;height:24px;background:#9a9a9a;border-radius:12px;box-shadow:0 1px 2px rgba(0,0,0,.5);"></div>
<div style="left:34px;top:812px;width:2541px;height:2px;background:#383838;"></div>
<div style="left:34px;top:814px;width:2541px;height:216px;background:#363636;"></div>
<div style="left:50px;top:814px;width:2514px;height:42px;background:#bfa246;"></div>
<div style="left:2564px;top:814px;width:11px;height:42px;background:repeating-linear-gradient(135deg,#313131 0 7px,#3a3a3a 7px 14px);"></div>
<svg style="left:2568px;top:816px" width="8" height="12" viewBox="0 0 8 12"><path d="M3.2 7.6L7.6 4.4" stroke="#d8d8d8" stroke-width="2.2" stroke-linecap="round"/></svg>
<svg style="left:34px;top:814px" width="17" height="44" viewBox="0 0 17 44"><path d="M0.5 6L12.5 18L0.5 30Z" fill="#555"/><path d="M15.6 0V186" stroke="#8a8a8a" stroke-width="1" stroke-dasharray="1.2 1.8"/></svg>
<span style="left:56.50px;top:817.28px;font-size:24px;line-height:24px;color:#000;">1</span>
<div style="left:228.25px;top:818px;width:2px;height:39px;background:#000;"></div>
<span style="left:235.75px;top:817.28px;font-size:24px;line-height:24px;color:#000;">2</span>
<div style="left:407.75px;top:818px;width:2px;height:39px;background:#000;"></div>
<span style="left:415.25px;top:817.28px;font-size:24px;line-height:24px;color:#000;">3</span>
<div style="left:587.25px;top:818px;width:2px;height:39px;background:#000;"></div>
<span style="left:594.75px;top:817.28px;font-size:24px;line-height:24px;color:#000;">4</span>
<div style="left:766.75px;top:818px;width:2px;height:39px;background:#000;"></div>
<span style="left:774.25px;top:817.28px;font-size:24px;line-height:24px;color:#000;">5</span>
<div style="left:946.25px;top:818px;width:2px;height:39px;background:#000;"></div>
<span style="left:953.75px;top:817.28px;font-size:24px;line-height:24px;color:#000;">6</span>
<div style="left:1125.75px;top:818px;width:2px;height:39px;background:#000;"></div>
<span style="left:1133.25px;top:817.28px;font-size:24px;line-height:24px;color:#000;">7</span>
<div style="left:1305.25px;top:818px;width:2px;height:39px;background:#000;"></div>
<span style="left:1312.75px;top:817.28px;font-size:24px;line-height:24px;color:#000;">8</span>
<div style="left:1484.75px;top:818px;width:2px;height:39px;background:#000;"></div>
<span style="left:1492.25px;top:817.28px;font-size:24px;line-height:24px;color:#000;">9</span>
<div style="left:1664.25px;top:818px;width:2px;height:39px;background:#000;"></div>
<span style="left:1671.75px;top:817.28px;font-size:24px;line-height:24px;color:#000;">10</span>
<div style="left:1843.75px;top:818px;width:2px;height:39px;background:#000;"></div>
<span style="left:1851.25px;top:817.28px;font-size:24px;line-height:24px;color:#000;">11</span>
<div style="left:2023.25px;top:818px;width:2px;height:39px;background:#000;"></div>
<span style="left:2030.75px;top:817.28px;font-size:24px;line-height:24px;color:#000;">12</span>
<div style="left:2202.75px;top:818px;width:2px;height:39px;background:#000;"></div>
<span style="left:2210.25px;top:817.28px;font-size:24px;line-height:24px;color:#000;">13</span>
<div style="left:2382.25px;top:818px;width:2px;height:39px;background:#000;"></div>
<span style="left:2389.75px;top:817.28px;font-size:24px;line-height:24px;color:#000;">14</span>
<div style="left:34px;top:856.5px;width:2541px;height:1.2px;background:#222;"></div>
<div style="left:34px;top:899.8px;width:2541px;height:1.4px;background:#222;"></div>
<svg style="left:0;top:850px" width="2580" height="160" viewBox="0 850 2580 160"><rect x="48.6" y="856.6" width="2515" height="143.2" rx="8" fill="#000"/><rect x="50" y="858" width="2512.3" height="140.4" rx="7" fill="#fff3c9"/><path d="M52 901H2560.3V991Q2560.3 996.4 2555 996.4H57.3Q52 996.4 52 991Z" fill="#c4a63a"/><path d="M50.6 900.4H2562" stroke="#7f754f" stroke-width="1.5"/><path d="M79.7 884V900M109.6 884V900M139.5 884V900M169.4 884V900M199.3 884V900M229.2 858V900M259.2 884V900M289.1 884V900M319.0 884V900M348.9 884V900M378.8 884V900M408.8 858V900M438.7 884V900M468.6 884V900M498.5 884V900M528.4 884V900M558.3 884V900M588.2 858V900M618.2 884V900M648.1 884V900M678.0 884V900M707.9 884V900M737.8 884V900M767.8 858V900M797.7 884V900M827.6 884V900M857.5 884V900M887.4 884V900M917.3 884V900M947.2 858V900M977.2 884V900M1007.1 884V900M1037.0 884V900M1066.9 884V900M1096.8 884V900M1126.8 858V900M1156.7 884V900M1186.6 884V900M1216.5 884V900M1246.4 884V900M1276.3 884V900M1306.2 858V900M1336.2 884V900M1366.1 884V900M1396.0 884V900M1425.9 884V900M1455.8 884V900M1485.8 858V900M1515.7 884V900M1545.6 884V900M1575.5 884V900M1605.4 884V900M1635.3 884V900M1665.2 858V900M1695.2 884V900M1725.1 884V900M1755.0 884V900M1784.9 884V900M1814.8 884V900M1844.8 858V900M1874.7 884V900M1904.6 884V900M1934.5 884V900M1964.4 884V900M1994.3 884V900M2024.2 858V900M2054.2 884V900M2084.1 884V900M2114.0 884V900M2143.9 884V900M2173.8 884V900M2203.8 858V900M2233.7 884V900M2263.6 884V900M2293.5 884V900M2323.4 884V900M2353.3 884V900M2383.2 858V900M2413.2 884V900M2443.1 884V900M2473.0 884V900M2502.9 884V900M2532.8 884V900" stroke="#bdb48e" stroke-width="1.5" fill="none"/><path d="M229.2 901.5V996M408.8 901.5V996M588.2 901.5V996M767.8 901.5V996M947.2 901.5V996M1126.8 901.5V996M1306.2 901.5V996M1485.8 901.5V996M1665.2 901.5V996M1844.8 901.5V996M2024.2 901.5V996M2203.8 901.5V996M2383.2 901.5V996" stroke="#d2b95e" stroke-width="1.4" fill="none"/><path d="M49.0 959.1H92.9M91.9 959.1H122.8M121.8 959.1H137.8M136.8 959.1H167.7M166.7 963.0H182.7M181.7 959.1H197.6M196.6 951.3H227.6M226.6 959.1H272.4M271.4 959.1H302.3M301.3 959.1H317.3M316.3 959.1H347.2M346.2 963.0H362.2M361.2 959.1H377.1M376.1 935.7H392.1M391.1 931.8H407.1M406.1 939.6H451.9M450.9 939.6H481.8M480.8 939.6H496.8M495.8 939.6H526.7M525.7 939.6H541.7M540.7 935.7H556.6M555.6 931.8H586.5M585.5 939.6H631.4M630.4 939.6H661.3M660.3 939.6H676.3M675.3 939.6H706.2M705.2 939.6H721.2M720.2 947.4H736.1M735.1 951.3H766.0M765.0 959.1H810.9M809.9 959.1H840.8M839.8 959.1H855.8M854.8 963.0H885.7M884.7 951.3H915.6M914.6 955.2H945.5M944.5 959.1H990.4M989.4 959.1H1005.4M1004.4 943.5H1065.2M1064.2 931.8H1095.1M1094.1 935.7H1125.0M1124.0 939.6H1169.9M1168.9 939.6H1199.8M1198.8 939.6H1214.8M1213.8 939.6H1244.7M1243.7 935.7H1259.7M1258.7 931.8H1289.6M1288.6 931.8H1304.5M1303.5 939.6H1349.4M1348.4 939.6H1379.3M1378.3 939.6H1394.3M1393.3 939.6H1424.2M1423.2 951.3H1439.2M1438.2 947.4H1469.1M1468.1 951.3H1484.0M1483.0 943.5H1528.9M1527.9 943.5H1558.8M1557.8 943.5H1573.8M1572.8 943.5H1603.7M1602.7 947.4H1618.7M1617.7 943.5H1633.6M1632.6 935.7H1663.5M1662.5 943.5H1708.4M1707.4 943.5H1738.3M1737.3 943.5H1753.3M1752.3 943.5H1783.2M1782.2 955.2H1798.2M1797.2 943.5H1813.1M1812.1 931.8H1843.0M1842.0 947.4H1887.9M1886.9 947.4H1917.8M1916.8 947.4H1932.8M1931.8 947.4H1962.7M1961.7 951.3H1977.7M1976.7 951.3H1992.6M1991.6 947.4H2007.6M2006.6 939.6H2022.5M2021.5 947.4H2067.4M2066.4 947.4H2097.3M2096.3 947.4H2112.3M2111.3 947.4H2142.2M2141.2 939.6H2157.2M2156.2 935.7H2172.1M2171.1 924.0H2202.1M2201.1 943.5H2246.9M2245.9 943.5H2276.8M2275.8 943.5H2291.8M2290.8 943.5H2321.7M2320.7 955.2H2336.7M2335.7 943.5H2351.6M2350.6 943.5H2381.6M2380.6 943.5H2426.4M2425.4 943.5H2441.4M2440.4 943.5H2471.3M2470.3 931.8H2501.2M2500.2 924.0H2531.1M2530.1 943.5H2552.1" stroke="#fff0c0" stroke-width="2" fill="none"/><path d="M49.0 948.9L58.0 959.1L49.0 969.3ZM91.9 948.9L100.9 959.1L91.9 969.3ZM121.8 948.9L130.8 959.1L121.8 969.3ZM136.8 948.9L145.8 959.1L136.8 969.3ZM166.7 952.8L175.7 963.0L166.7 973.2ZM181.7 951.8L188.9 959.1L181.7 966.4ZM196.6 941.1L205.6 951.3L196.6 961.5ZM226.6 948.9L235.6 959.1L226.6 969.3ZM271.4 948.9L280.4 959.1L271.4 969.3ZM301.3 948.9L310.3 959.1L301.3 969.3ZM316.3 948.9L325.3 959.1L316.3 969.3ZM346.2 952.8L355.2 963.0L346.2 973.2ZM361.2 948.9L370.2 959.1L361.2 969.3ZM376.1 925.5L385.1 935.7L376.1 945.9ZM391.1 924.5L398.3 931.8L391.1 939.1ZM406.1 929.4L415.1 939.6L406.1 949.8ZM450.9 929.4L459.9 939.6L450.9 949.8ZM480.8 929.4L489.8 939.6L480.8 949.8ZM495.8 929.4L504.8 939.6L495.8 949.8ZM525.7 929.4L534.7 939.6L525.7 949.8ZM540.7 928.4L547.9 935.7L540.7 943.0ZM555.6 921.6L564.6 931.8L555.6 942.0ZM585.5 929.4L594.5 939.6L585.5 949.8ZM630.4 929.4L639.4 939.6L630.4 949.8ZM660.3 929.4L669.3 939.6L660.3 949.8ZM675.3 929.4L684.3 939.6L675.3 949.8ZM705.2 929.4L714.2 939.6L705.2 949.8ZM720.2 937.2L729.2 947.4L720.2 957.6ZM735.1 941.1L744.1 951.3L735.1 961.5ZM765.0 948.9L774.0 959.1L765.0 969.3ZM809.9 948.9L818.9 959.1L809.9 969.3ZM839.8 951.8L847.0 959.1L839.8 966.4ZM854.8 952.8L863.8 963.0L854.8 973.2ZM884.7 941.1L893.7 951.3L884.7 961.5ZM914.6 945.0L923.6 955.2L914.6 965.4ZM944.5 948.9L953.5 959.1L944.5 969.3ZM989.4 948.9L998.4 959.1L989.4 969.3ZM1004.4 933.3L1013.4 943.5L1004.4 953.7ZM1064.2 921.6L1073.2 931.8L1064.2 942.0ZM1094.1 925.5L1103.1 935.7L1094.1 945.9ZM1124.0 929.4L1133.0 939.6L1124.0 949.8ZM1168.9 929.4L1177.9 939.6L1168.9 949.8ZM1198.8 929.4L1207.8 939.6L1198.8 949.8ZM1213.8 929.4L1222.8 939.6L1213.8 949.8ZM1243.7 925.5L1252.7 935.7L1243.7 945.9ZM1258.7 921.6L1267.7 931.8L1258.7 942.0ZM1288.6 924.5L1295.8 931.8L1288.6 939.1ZM1303.5 929.4L1312.5 939.6L1303.5 949.8ZM1348.4 929.4L1357.4 939.6L1348.4 949.8ZM1378.3 932.3L1385.5 939.6L1378.3 946.9ZM1393.3 929.4L1402.3 939.6L1393.3 949.8ZM1423.2 941.1L1432.2 951.3L1423.2 961.5ZM1438.2 937.2L1447.2 947.4L1438.2 957.6ZM1468.1 941.1L1477.1 951.3L1468.1 961.5ZM1483.0 933.3L1492.0 943.5L1483.0 953.7ZM1527.9 933.3L1536.9 943.5L1527.9 953.7ZM1557.8 936.2L1565.0 943.5L1557.8 950.8ZM1572.8 933.3L1581.8 943.5L1572.8 953.7ZM1602.7 937.2L1611.7 947.4L1602.7 957.6ZM1617.7 933.3L1626.7 943.5L1617.7 953.7ZM1632.6 925.5L1641.6 935.7L1632.6 945.9ZM1662.5 933.3L1671.5 943.5L1662.5 953.7ZM1707.4 933.3L1716.4 943.5L1707.4 953.7ZM1737.3 936.2L1744.5 943.5L1737.3 950.8ZM1752.3 933.3L1761.3 943.5L1752.3 953.7ZM1782.2 945.0L1791.2 955.2L1782.2 965.4ZM1797.2 933.3L1806.2 943.5L1797.2 953.7ZM1812.1 921.6L1821.1 931.8L1812.1 942.0ZM1842.0 937.2L1851.0 947.4L1842.0 957.6ZM1886.9 937.2L1895.9 947.4L1886.9 957.6ZM1916.8 940.1L1924.0 947.4L1916.8 954.7ZM1931.8 937.2L1940.8 947.4L1931.8 957.6ZM1961.7 941.1L1970.7 951.3L1961.7 961.5ZM1976.7 941.1L1985.7 951.3L1976.7 961.5ZM1991.6 937.2L2000.6 947.4L1991.6 957.6ZM2006.6 929.4L2015.6 939.6L2006.6 949.8ZM2021.5 937.2L2030.5 947.4L2021.5 957.6ZM2066.4 937.2L2075.4 947.4L2066.4 957.6ZM2096.3 937.2L2105.3 947.4L2096.3 957.6ZM2111.3 937.2L2120.3 947.4L2111.3 957.6ZM2141.2 929.4L2150.2 939.6L2141.2 949.8ZM2156.2 928.4L2163.4 935.7L2156.2 943.0ZM2171.1 913.8L2180.1 924.0L2171.1 934.2ZM2201.1 933.3L2210.1 943.5L2201.1 953.7ZM2245.9 933.3L2254.9 943.5L2245.9 953.7ZM2275.8 933.3L2284.8 943.5L2275.8 953.7ZM2290.8 933.3L2299.8 943.5L2290.8 953.7ZM2320.7 945.0L2329.7 955.2L2320.7 965.4ZM2335.7 933.3L2344.7 943.5L2335.7 953.7ZM2350.6 933.3L2359.6 943.5L2350.6 953.7ZM2380.6 933.3L2389.6 943.5L2380.6 953.7ZM2425.4 933.3L2434.4 943.5L2425.4 953.7ZM2440.4 933.3L2449.4 943.5L2440.4 953.7ZM2470.3 921.6L2479.3 931.8L2470.3 942.0ZM2500.2 913.8L2509.2 924.0L2500.2 934.2ZM2530.1 933.3L2539.1 943.5L2530.1 953.7Z" fill="#fff0c0"/><rect x="61.6" y="867.6" width="26.2" height="19.8" rx="3" fill="none" stroke="#6a5a1c" stroke-width="1.8"/><path d="M71.5 873L79.5 877.6L71.5 882.2Z" fill="#6a5a1c"/></svg>
<span style="left:104.12px;top:865.18px;font-size:22px;line-height:22px;color:#5e4e10;letter-spacing:0.585px;">Bass Player - Pop rock</span>
<span style="left:2151.12px;top:865.18px;font-size:22px;line-height:22px;color:#5e4e10;letter-spacing:0.609px;">Bass Player - Pop rock</span>
<div style="left:145.6px;top:864px;width:3.4px;height:136px;background:#fff;border-left:0.7px solid #444;border-right:0.7px solid #444;"></div>
<svg style="left:127px;top:856px" width="40" height="40" viewBox="0 0 40 40"><path d="M2.6 8.6Q2.6 2.2 9 2.2H31Q37.4 2.2 37.4 8.6V19.4L20 35.4L2.6 19.4Z" fill="rgba(255,255,255,.72)" stroke="rgba(120,110,80,.55)" stroke-width="0.8"/><path d="M20 8V36" stroke="#fff" stroke-width="2"/></svg>
<div style="left:36px;top:1008px;width:207px;height:16px;background:#797979;border-radius:8px;"></div>
<div style="left:34px;top:1030px;width:2541px;height:1.4px;background:#262626;"></div>
<div style="left:35px;top:1031.4px;width:2540px;height:533px;background:#2d2d2d;border-radius:0 0 11px 0;"></div>
<span style="left:334.09px;top:1154.29px;font-size:26px;line-height:26px;color:#ababab;letter-spacing:0.209px;">Bass Player</span>
<span style="left:350.69px;top:1190.49px;font-size:26px;line-height:26px;color:#ffd60a;letter-spacing:0.745px;">Pop rock</span>
<svg style="left:285px;top:1228px" width="240" height="240" viewBox="0 0 240 240"><defs><radialGradient id="cg" cx="50%" cy="50%" r="50%"><stop offset="0" stop-color="#272725"/><stop offset="0.85" stop-color="#222"/><stop offset="1" stop-color="#262626"/></radialGradient><clipPath id="cc"><circle cx="120" cy="120" r="118.6"/></clipPath></defs><circle cx="120" cy="120" r="120" fill="url(#cg)"/><g clip-path="url(#cc)"><path d="M-11.9 163.4C-11.9 146.2 -2.3 153.9 2.5 148.9C7.3 143.9 11.0 137.6 17.0 133.6C23.0 129.5 31.1 127.3 38.7 124.5C46.2 121.7 55.5 119.2 62.2 116.7C68.8 114.2 73.8 112.9 78.4 109.5C83.1 106.1 86.6 102.3 90.2 96.5C93.8 90.7 96.2 81.9 100.1 74.8C104.0 67.7 108.9 59.5 113.7 54.0C118.5 48.5 124.4 44.6 129.0 41.9C133.7 39.2 137.9 38.2 141.7 37.9C145.5 37.6 149.5 39.0 151.6 40.1C153.7 41.2 154.6 42.5 154.3 44.5C154.0 46.4 152.1 49.0 149.8 51.7C147.6 54.3 143.3 57.3 140.8 60.4C138.2 63.5 135.6 67.1 134.5 70.3C133.3 73.5 133.5 76.8 134.1 79.3C134.7 81.9 136.2 84.3 138.1 85.7C139.9 87.0 142.0 85.7 145.3 87.5C148.6 89.3 157.5 91.2 158.0 96.5C158.4 101.8 149.7 114.1 148.0 119.1C146.4 124.1 147.3 123.8 148.0 126.3C148.8 128.9 150.4 132.4 152.5 134.5C154.6 136.6 157.7 138.6 160.7 139.0C163.7 139.3 167.4 137.9 170.6 136.6C173.8 135.3 177.0 132.0 179.6 131.2C182.3 130.4 184.9 130.7 186.5 131.9C188.2 133.1 189.6 135.5 189.6 138.4C189.6 141.3 188.5 145.7 186.5 149.3C184.6 152.8 181.4 156.5 177.8 159.8C174.3 163.0 170.3 165.9 165.2 168.8C160.1 171.7 151.6 174.6 147.1 177.1C142.6 179.6 140.4 180.7 138.1 183.6C135.7 186.5 134.8 189.6 133.0 194.5C131.3 199.3 129.9 206.5 127.6 212.5C125.3 218.6 122.2 224.9 119.1 230.6C116.0 236.3 116.5 241.2 109.2 246.5C101.8 251.9 92.6 261.9 74.8 262.8C57.0 263.7 17.0 268.5 2.5 251.9C-11.9 235.4 -11.9 180.5 -11.9 163.4Z" fill="#6a5c27" stroke="#f2d23e" stroke-width="1.7"/><path d="M124.5 95.8C128.1 93.1 128.5 96.7 129.0 98.7C129.5 100.6 129.4 104.1 127.6 107.3C125.8 110.6 117.0 113.7 118.2 118.2C119.3 122.7 129.5 134.2 134.5 134.5C139.4 134.8 145.8 121.2 148.0 120.0C150.3 118.8 147.3 124.8 148.0 127.2C148.8 129.7 150.4 132.8 152.5 134.8C154.6 136.9 157.7 139.2 160.7 139.5C163.7 139.9 167.6 138.1 170.6 137.0C173.6 135.8 176.6 133.1 178.7 132.7C180.8 132.2 182.7 132.7 183.3 134.5C183.9 136.3 183.9 140.2 182.4 143.5C180.8 146.8 177.5 151.0 174.2 154.3C170.9 157.7 167.4 160.4 162.5 163.4C157.5 166.4 149.0 169.7 144.4 172.4C139.8 175.1 137.4 176.0 134.8 179.6C132.3 183.3 130.9 188.4 129.0 194.1C127.2 199.8 125.9 207.7 123.6 214.0C121.4 220.3 118.2 226.9 115.5 232.1C112.8 237.2 112.3 242.0 107.3 244.7C102.4 247.4 92.0 251.0 85.7 248.3C79.3 245.7 69.4 232.7 69.4 228.8C69.4 224.9 81.4 227.7 85.7 225.2C89.9 222.7 93.5 218.4 95.1 214.0C96.6 209.6 97.1 204.2 95.1 198.6C93.0 193.0 87.8 186.1 82.9 180.5C78.1 175.0 69.7 170.4 66.1 165.5C62.6 160.7 61.3 155.9 61.8 151.6C62.3 147.4 65.4 143.3 69.4 139.9C73.4 136.5 79.3 135.4 85.7 131.2C92.0 127.0 100.9 120.5 107.3 114.6C113.8 108.7 120.9 98.4 124.5 95.8Z" fill="#363120" stroke="#9c8934" stroke-width="0.9"/><path d="M33.4 198.6L206.9 35.9" stroke="#9c8934" stroke-width="0.8"/><path d="M36.9 202.2L210.4 39.6" stroke="#9c8934" stroke-width="0.8"/><path d="M40.4 205.9L213.9 43.2" stroke="#9c8934" stroke-width="0.8"/><path d="M44.0 209.5L217.5 46.8" stroke="#9c8934" stroke-width="0.8"/><rect x="79.6" y="145.1" width="20" height="11.2" rx="2.4" transform="rotate(38 89.6 150.7)" fill="#2a281f" stroke="#c9ae3a" stroke-width="0.9"/><rect x="77.8" y="162.5" width="20" height="11.2" rx="2.4" transform="rotate(38 87.8 168.1)" fill="#2a281f" stroke="#c9ae3a" stroke-width="0.9"/><g transform="translate(124.9 124.9) rotate(-44.2)"><rect x="-1" y="-10.8" width="160" height="21.6" rx="1.5" fill="#5d5226" stroke="#f2d23e" stroke-width="1.7"/><path d="M12 -10V10" stroke="#a8922f" stroke-width="1"/><path d="M26 -10V10" stroke="#a8922f" stroke-width="1"/><path d="M41 -10V10" stroke="#a8922f" stroke-width="1"/><path d="M57 -10V10" stroke="#a8922f" stroke-width="1"/><path d="M74 -10V10" stroke="#a8922f" stroke-width="1"/><path d="M92 -10V10" stroke="#a8922f" stroke-width="1"/><path d="M111 -10V10" stroke="#a8922f" stroke-width="1"/><path d="M0 -6.5H160" stroke="#a8922f" stroke-width="0.8"/><path d="M0 -2.2H160" stroke="#a8922f" stroke-width="0.8"/><path d="M0 2.2H160" stroke="#a8922f" stroke-width="0.8"/><path d="M0 6.5H160" stroke="#a8922f" stroke-width="0.8"/></g><rect x="28.6" y="196.1" width="28" height="14" transform="rotate(45 42.6 203.1)" fill="#5d5226" stroke="#f2d23e" stroke-width="1.7"/><circle cx="105.5" cy="213.4" r="3.8" fill="#8f7d30"/><circle cx="92.5" cy="229.9" r="3.8" fill="#8f7d30"/></g></svg>
<div style="left:372px;top:1494px;width:66px;height:44px;background:#444;border-radius:6px;box-shadow:0 1px 2px rgba(0,0,0,.4);"></div>
<svg style="left:372px;top:1494px" width="66" height="44" viewBox="0 0 66 44" fill="none" stroke="#d6d6d6" stroke-width="1.9" stroke-linecap="round" stroke-linejoin="round"><path d="M39.8 17.2A10.6 10.6 0 1 1 32.6 14.2"/><path d="M31.2 8.6L36 13.8L30.6 18"/></svg>
<span style="left:562.19px;top:1154.29px;font-size:26px;line-height:26px;color:#ababab;letter-spacing:0.752px;">Complexité</span>
<span style="left:746.09px;top:1154.29px;font-size:26px;line-height:26px;color:#ababab;letter-spacing:0.816px;">Intensité</span>
<div style="left:626.9px;top:1213px;width:7.4px;height:304px;background:#393939;border-radius:3.7px;"></div>
<div style="left:627.3000000000001px;top:1212px;width:6.6px;height:305px;background:#ffd60a;border-radius:0 0 3px 3px;"></div>
<div style="left:602.6px;top:1202px;width:56px;height:24px;background:#555;border-radius:12px;box-shadow:0 3px 7px rgba(0,0,0,.5);"></div>
<div style="left:627.3000000000001px;top:1215px;width:6.6px;height:11px;background:rgba(255,214,10,.35);"></div>
<div style="left:622.6px;top:1213px;width:16px;height:2.2px;background:#ffd60a;"></div>
<div style="left:794.9px;top:1213px;width:7.4px;height:304px;background:#393939;border-radius:3.7px;"></div>
<div style="left:795.3000000000001px;top:1300px;width:6.6px;height:217px;background:#ffd60a;border-radius:0 0 3px 3px;"></div>
<div style="left:770.6px;top:1290px;width:56px;height:24px;background:#555;border-radius:12px;box-shadow:0 3px 7px rgba(0,0,0,.5);"></div>
<div style="left:795.3000000000001px;top:1303px;width:6.6px;height:11px;background:rgba(255,214,10,.35);"></div>
<div style="left:790.6px;top:1301px;width:16px;height:2.2px;background:#ffd60a;"></div>
<div style="left:911px;top:1114.5px;width:920px;height:423.5px;background:#222222;border-radius:15px 0 0 15px;box-shadow:0 1px 0 rgba(255,255,255,.05);"></div>
<div style="left:1831px;top:1114.5px;width:520px;height:423.5px;background:#272727;border-radius:0 15px 15px 0;box-shadow:0 1px 0 rgba(255,255,255,.05);"></div>
<div style="left:911px;top:1228.5px;width:920px;height:1.4px;background:#2f2f2f;"></div>
<div style="left:911px;top:1383.5px;width:920px;height:1.4px;background:#2f2f2f;"></div>
<div style="left:1438.5px;top:1055px;width:388px;height:42px;background:#262626;border-radius:10px;"></div>
<div style="left:1439.5px;top:1056px;width:139.5px;height:40px;background:#4e4e4e;border-radius:9px;box-shadow:0 1px 2px rgba(0,0,0,.5);"></div>
<span style="left:1455.17px;top:1063.77px;font-size:26.5px;line-height:26.5px;color:#fff;letter-spacing:0.753px;-webkit-text-stroke:1.05px #fff;">Principal</span>
<span style="left:1597.32px;top:1063.77px;font-size:26.5px;line-height:26.5px;color:#c2c2c2;letter-spacing:0.725px;-webkit-text-stroke:0.95px #c2c2c2;">Détails</span>
<div style="left:1699.5px;top:1065px;width:1.4px;height:23px;background:#3a3a3a;"></div>
<span style="left:1717.02px;top:1063.77px;font-size:26.5px;line-height:26.5px;color:#c2c2c2;letter-spacing:0.687px;-webkit-text-stroke:0.95px #c2c2c2;">Manuel</span>
<div style="left:1096px;top:1154px;width:34px;height:34px;background:#3a3a3a;border-radius:17px;"></div>
<span style="left:1107.30px;top:1161.05px;font-size:20.5px;line-height:20.5px;color:#ffd60a;font-weight:700;">1</span>
<svg style="left:1150px;top:1155px" width="460" height="32" viewBox="1150 1155 460 32"><circle cx="1169.8" cy="1171" r="8.1" fill="#ffd60a"/><circle cx="1217.9" cy="1171" r="8.1" fill="#8c7722"/><circle cx="1284" cy="1171" r="8.1" fill="#8c7722"/><circle cx="1332" cy="1171" r="8.1" fill="#ffd60a"/><circle cx="1398" cy="1171" r="8.1" fill="#8c7722"/><circle cx="1446" cy="1171" r="8.1" fill="#ffd60a"/><circle cx="1512" cy="1171" r="8.1" fill="#8c7722"/><circle cx="1560" cy="1171" r="8.1" fill="#ffd60a"/><circle cx="1193.9" cy="1171" r="4.2" fill="#3c3c3c"/><circle cx="1242" cy="1171" r="4.2" fill="#3c3c3c"/><circle cx="1308" cy="1171" r="4.2" fill="#3c3c3c"/><circle cx="1356" cy="1171" r="4.2" fill="#3c3c3c"/><circle cx="1422" cy="1171" r="4.2" fill="#3c3c3c"/><circle cx="1470" cy="1171" r="4.2" fill="#3c3c3c"/><circle cx="1536" cy="1171" r="4.2" fill="#3c3c3c"/><circle cx="1584" cy="1171" r="4.2" fill="#3c3c3c"/><path d="M1263 1164V1178" stroke="#464646" stroke-width="1.6"/><path d="M1377 1164V1178" stroke="#464646" stroke-width="1.6"/><path d="M1491 1164V1178" stroke="#464646" stroke-width="1.6"/></svg>
<span style="left:1161.74px;top:1195.50px;font-size:21.5px;line-height:21.5px;color:#ababab;letter-spacing:0.659px;">Suivre :</span>
<span style="left:1245.64px;top:1195.50px;font-size:21.5px;line-height:21.5px;color:#ffd60a;letter-spacing:0.925px;-webkit-text-stroke:0.55px #ffd60a;">Rythme de l’accord / TESTlogicSession</span>
<span style="left:1057.29px;top:1274.49px;font-size:26px;line-height:26px;color:#ababab;letter-spacing:0.894px;">Mélodie</span>
<span style="left:995.46px;top:1308.19px;font-size:26px;line-height:26px;color:#ffd60a;letter-spacing:0.665px;-webkit-text-stroke:0.8px #ffd60a;">Certaines notes</span>
<svg style="left:1196.6px;top:1308px" width="16" height="24" viewBox="0 0 16 24" fill="none" stroke="#8e8e8e" stroke-width="1.9" stroke-linecap="round" stroke-linejoin="round"><path d="M2 9L8 3.2L14 9M2 15.6L8 21.4L14 15.6"/></svg>
<span style="left:1340.69px;top:1274.49px;font-size:26px;line-height:26px;color:#ababab;letter-spacing:0.809px;">Octaves</span>
<span style="left:1337.86px;top:1308.19px;font-size:26px;line-height:26px;color:#ffd60a;letter-spacing:0.824px;-webkit-text-stroke:0.8px #ffd60a;">Aucun</span>
<svg style="left:1424.8px;top:1308px" width="16" height="24" viewBox="0 0 16 24" fill="none" stroke="#8e8e8e" stroke-width="1.9" stroke-linecap="round" stroke-linejoin="round"><path d="M2 9L8 3.2L14 9M2 15.6L8 21.4L14 15.6"/></svg>
<span style="left:1598.64px;top:1274.49px;font-size:26px;line-height:26px;color:#ababab;letter-spacing:0.431px;">Phrasage</span>
<span style="left:1611.96px;top:1308.19px;font-size:26px;line-height:26px;color:#ffd60a;letter-spacing:0.659px;-webkit-text-stroke:0.8px #ffd60a;">Long</span>
<svg style="left:1682px;top:1308px" width="16" height="24" viewBox="0 0 16 24" fill="none" stroke="#8e8e8e" stroke-width="1.9" stroke-linecap="round" stroke-linejoin="round"><path d="M2 9L8 3.2L14 9M2 15.6L8 21.4L14 15.6"/></svg>
<span style="left:1113.46px;top:1412.29px;font-size:26px;line-height:26px;color:#b4b4b4;letter-spacing:0.542px;">Note la plus basse</span>
<span style="left:1600.00px;top:1413.14px;font-size:25px;line-height:25px;color:#ffd60a;-webkit-text-stroke:0.8px #ffd60a;letter-spacing:-1.5px;">E1</span>
<div style="left:1113.7px;top:1456px;width:514.5px;height:60px;background:#1b1b1b;border-radius:4px;"></div>
<div style="left:1218px;top:1460.5px;width:8px;height:51.5px;background:#ffd60a;border-radius:4px;"></div>
<svg style="left:1898.7px;top:1188.5px" width="140" height="140" viewBox="0 0 140 140"><defs><radialGradient id="ksa" cx="50%" cy="50%" r="50%"><stop offset="0.8" stop-color="#000" stop-opacity="0.4"/><stop offset="1" stop-color="#000" stop-opacity="0"/></radialGradient><linearGradient id="kfa" x1="0" y1="0" x2="0" y2="1"><stop offset="0" stop-color="#565656"/><stop offset="0.12" stop-color="#525252"/><stop offset="1" stop-color="#4f4f4f"/></linearGradient></defs><circle cx="70" cy="72.5" r="53" fill="url(#ksa)"/><path d="M39.24 115.60A55 55 0 1 1 100.76 115.60" fill="none" stroke="#313131" stroke-width="6.2" stroke-linecap="round"/><path d="M39.24 115.60A55 55 0 1 1 124.79 65.21" fill="none" stroke="#ffd60a" stroke-width="6.2" stroke-linecap="butt"/><circle cx="39.24" cy="115.60" r="3.1" fill="#ffd60a"/><circle cx="70" cy="70" r="42.9" fill="url(#kfa)"/><path d="M112.17 65.57L94.37 67.44" stroke="#ffd60a" stroke-width="2.2"/></svg>
<svg style="left:2126.7px;top:1260.0px" width="140" height="140" viewBox="0 0 140 140"><defs><radialGradient id="ksb" cx="50%" cy="50%" r="50%"><stop offset="0.8" stop-color="#000" stop-opacity="0.4"/><stop offset="1" stop-color="#000" stop-opacity="0"/></radialGradient><linearGradient id="kfb" x1="0" y1="0" x2="0" y2="1"><stop offset="0" stop-color="#565656"/><stop offset="0.12" stop-color="#525252"/><stop offset="1" stop-color="#4f4f4f"/></linearGradient></defs><circle cx="70" cy="72.5" r="53" fill="url(#ksb)"/><path d="M39.24 115.60A55 55 0 1 1 100.76 115.60" fill="none" stroke="#313131" stroke-width="6.2" stroke-linecap="round"/><circle cx="70" cy="70" r="42.9" fill="url(#kfb)"/><path d="M46.29 105.15L56.30 90.31" stroke="#ffd60a" stroke-width="2.2"/><circle cx="39.2" cy="115.6" r="1.2" fill="#ffd60a"/></svg>
<svg style="left:1898.7px;top:1391.0px" width="140" height="140" viewBox="0 0 140 140"><defs><radialGradient id="ksc" cx="50%" cy="50%" r="50%"><stop offset="0.8" stop-color="#000" stop-opacity="0.4"/><stop offset="1" stop-color="#000" stop-opacity="0"/></radialGradient><linearGradient id="kfc" x1="0" y1="0" x2="0" y2="1"><stop offset="0" stop-color="#565656"/><stop offset="0.12" stop-color="#525252"/><stop offset="1" stop-color="#4f4f4f"/></linearGradient></defs><circle cx="70" cy="72.5" r="53" fill="url(#ksc)"/><path d="M39.24 115.60A55 55 0 1 1 100.76 115.60" fill="none" stroke="#313131" stroke-width="6.2" stroke-linecap="round"/><path d="M39.24 115.60A55 55 0 0 1 24.40 39.24" fill="none" stroke="#ffd60a" stroke-width="6.2" stroke-linecap="butt"/><circle cx="39.24" cy="115.60" r="3.1" fill="#ffd60a"/><circle cx="70" cy="70" r="42.9" fill="url(#kfc)"/><path d="M34.04 47.53L49.22 57.02" stroke="#ffd60a" stroke-width="2.2"/></svg>
<span style="left:1878.94px;top:1152.77px;font-size:26.5px;line-height:26.5px;color:#ababab;letter-spacing:0.264px;">Quantité Fill</span>
<span style="left:1879.64px;top:1355.37px;font-size:26.5px;line-height:26.5px;color:#ababab;letter-spacing:0.242px;">Complexité Fill</span>
<span style="left:2142.64px;top:1224.77px;font-size:26.5px;line-height:26.5px;color:#ababab;letter-spacing:0.419px;">Swing</span>
<svg style="left:2035px;top:1155.4px" width="24" height="22" viewBox="0 0 24 22"><rect x="0.6" y="9.5" width="13" height="10.8" rx="2" fill="#b0b0b0"/><path d="M10.6 9.6V6.4A4.3 4.3 0 0 1 19.2 6.4V8.6" fill="none" stroke="#b0b0b0" stroke-width="1.9" stroke-linecap="round"/></svg>
<svg style="left:2228px;top:1226.8px" width="24" height="22" viewBox="0 0 24 22"><rect x="0.6" y="9.5" width="13" height="10.8" rx="2" fill="#b0b0b0"/><path d="M10.6 9.6V6.4A4.3 4.3 0 0 1 19.2 6.4V8.6" fill="none" stroke="#b0b0b0" stroke-width="1.9" stroke-linecap="round"/></svg>
<div style="left:2147px;top:1423.5px;width:100px;height:43.5px;background:#444;border-radius:6px;box-shadow:0 1px 2px rgba(0,0,0,.4);"></div>
<span style="left:2182.54px;top:1432.49px;font-size:26px;line-height:26px;color:#f0f0f0;">8e</span>
</div></body></html>
